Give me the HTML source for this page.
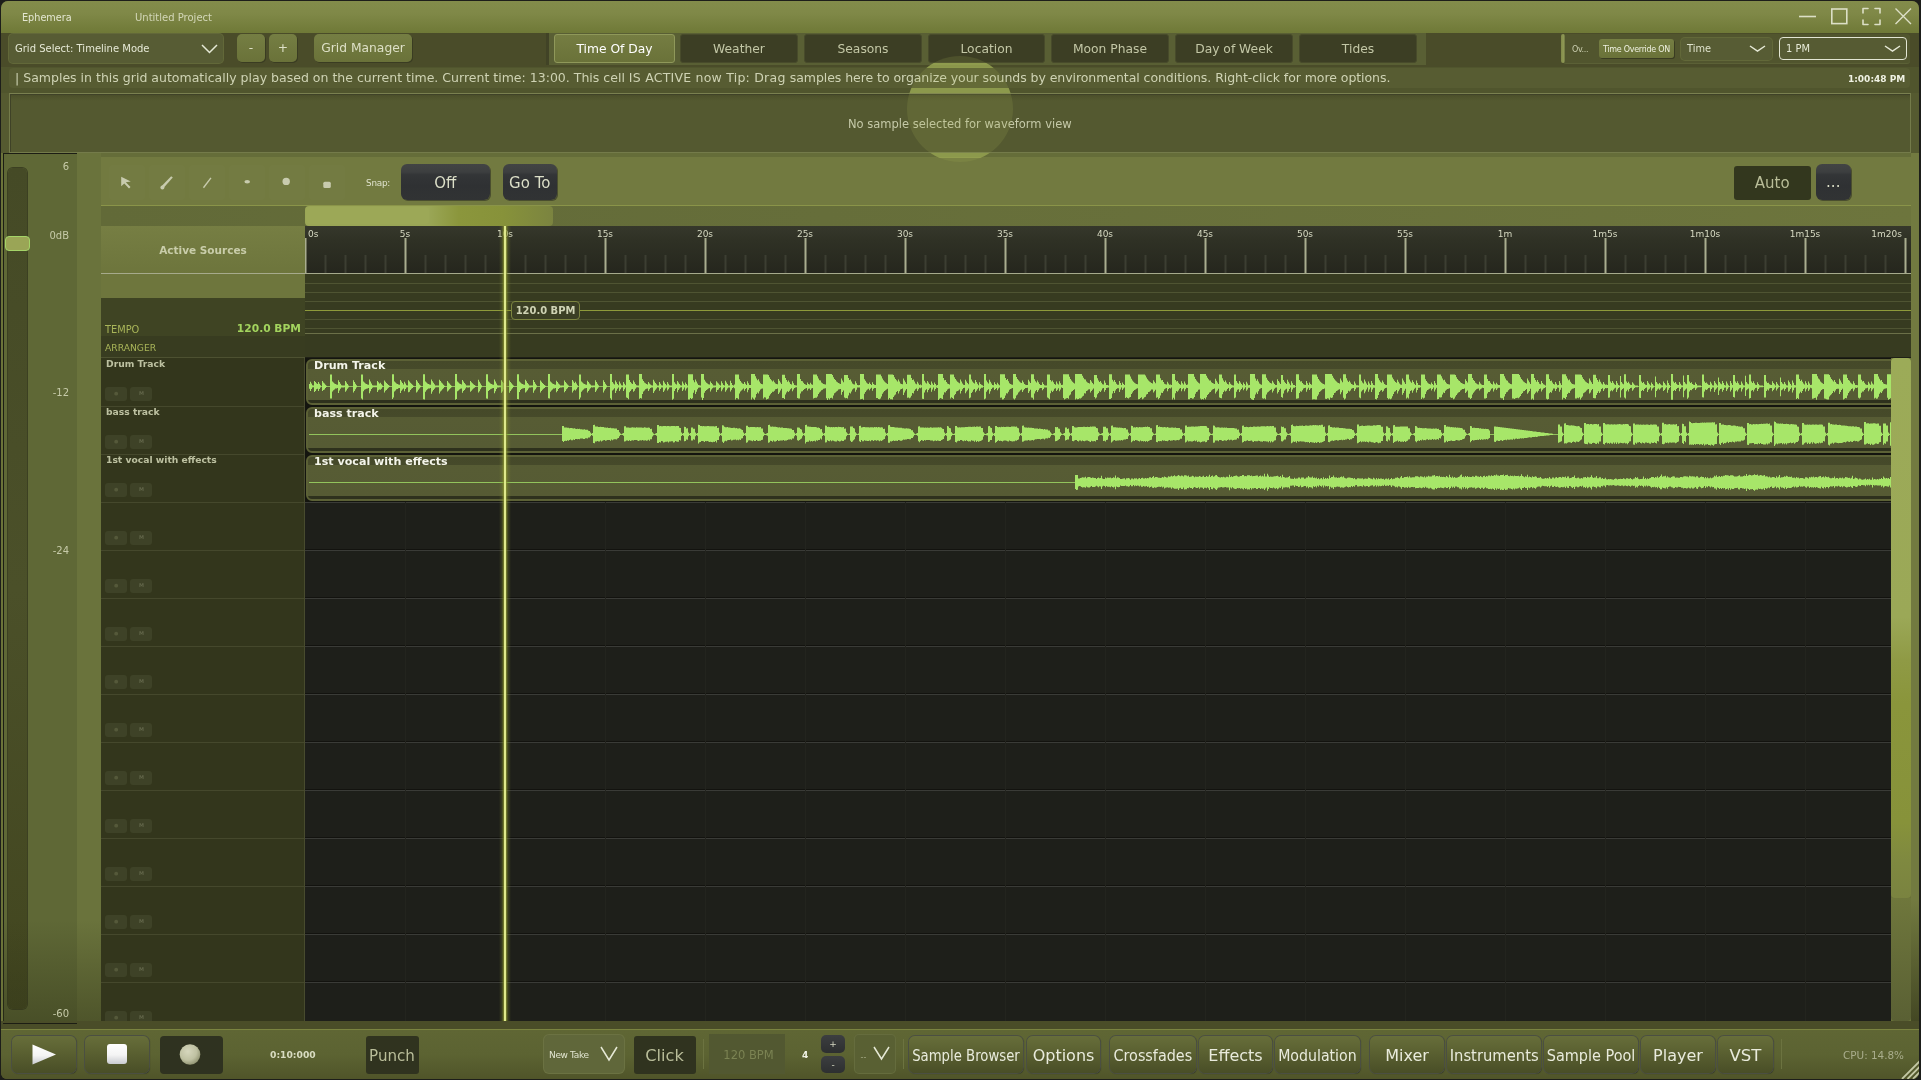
<!DOCTYPE html><html><head><meta charset="utf-8"><title>Ephemera</title><style>
*{box-sizing:border-box;margin:0;padding:0}
html,body{width:1921px;height:1080px;overflow:hidden;background:#1d1e1a}
body{font-family:"DejaVu Sans","Liberation Sans",sans-serif;color:#dfe2cc;position:relative}
.a{position:absolute}
.t{position:absolute;white-space:nowrap;line-height:1}
.c{display:flex;align-items:center;justify-content:center;white-space:nowrap}
.bb{overflow:visible}.bb span{flex:none}
#win{left:1px;top:1px;width:1918.4px;height:1078px;border-radius:7px 7px 6px 6px;background:#555a30;overflow:hidden}
#title{left:0;top:0;width:1919px;height:32px;background:linear-gradient(#838c4b 0%,#7f8847 40%,#6f7937 100%)}
#tool{left:0;top:32px;width:1919px;height:35px;background:#4a4c29}
.btn{border-radius:5px;background:linear-gradient(#757e43,#6a7239);box-shadow:1px 1px 0 #3a3c22;color:#dde0c6}
.tab{border-radius:3px;background:#3c3e24;color:#c3c7a6;font-size:12.3px;top:1px;height:29px;border:1px solid #484b2b;padding-top:1px}
.tab.on{background:linear-gradient(#757d42,#6a7239);color:#fff;border-color:#8f985a}
.combo{border-radius:4px;background:#575c34;box-shadow:0 0 0 1px #626839}
</style></head><body><div class="a" id="win"><div class="a" id="o" style="left:-1px;top:-1px;width:1921px;height:1080px;will-change:transform"><div class="a" style="left:1px;top:1px"><div class="a" id="title">
<div class="t" style="left:21px;top:12px;font-size:9.7px;color:#e4e7d2">Ephemera</div>
<div class="t" style="left:134px;top:12px;font-size:10px;color:#d3d7b8">Untitled Project</div>
<svg class="a" style="left:1790px;top:-0.8px" width="129" height="32" fill="none" stroke="#dcdfc6" stroke-width="1.6">
<path d="M8 16.5H25"/><rect x="40.8" y="9" width="15" height="14.6"/>
<path d="M72 13V8.5H77M84 8.5H89V13M89 20V24.5H84M77 24.5H72V20" stroke-linecap="round" stroke-linejoin="round"/>
<path d="M104.5 8.5L120 24M120 8.5L104.5 24" stroke-width="1.4"/></svg>
</div>
<div class="a" id="tool">
<div class="a combo" style="left:8px;top:1px;width:214px;height:29px"></div>
<div class="t" style="left:14px;top:10.5px;font-size:10px;color:#e6e9d6">Grid Select: Timeline Mode</div>
<svg class="a" style="left:199px;top:8.5px" width="20" height="14" fill="none" stroke="#e6e9d6" stroke-width="1.5"><path d="M2 3L9.5 10.5L17 3"/></svg>
<div class="a btn c" style="left:236px;top:1px;width:28px;height:28px;font-size:12.3px">-</div>
<div class="a btn c" style="left:268px;top:1px;width:28px;height:28px;font-size:12.3px">+</div>
<div class="a btn c" style="left:313px;top:1px;width:98px;height:28px;font-size:12.3px">Grid Manager</div>
<div class="a" style="left:545px;top:0;width:3px;height:32px;background:#414326"></div>
<div class="a" style="left:548px;top:0;width:877px;height:32px;background:#595f34"></div>
<div class="a tab c on" style="left:553px;width:121px">Time Of Day</div>
<div class="a tab c" style="left:679px;width:118px">Weather</div>
<div class="a tab c" style="left:803px;width:118px">Seasons</div>
<div class="a tab c" style="left:927px;width:117px">Location</div>
<div class="a tab c" style="left:1050px;width:118px">Moon Phase</div>
<div class="a tab c" style="left:1174px;width:118px">Day of Week</div>
<div class="a tab c" style="left:1298px;width:118px">Tides</div>
<div class="a" style="left:1562px;top:1px;width:347px;height:29px;background:#51552e;border-radius:3px;box-shadow:0 1px 0 #5b6036"></div>
<div class="a" style="left:1560px;top:1px;width:4px;height:29px;background:linear-gradient(90deg,#7f8848,#8f9955 60%,#6b7340);border-radius:2px"></div>
<div class="t" style="left:1571px;top:12.5px;font-size:8px;letter-spacing:-0.4px;color:#c9cdae">Ov...</div>
<div class="a btn c" style="left:1598px;top:6px;width:75px;height:19px;padding-top:1.5px;font-size:8px;border-radius:3px;letter-spacing:-0.3px;color:#eef0e0">Time Override ON</div>
<div class="a combo" style="left:1680px;top:5px;width:91px;height:22px"></div>
<div class="t" style="left:1686px;top:11px;font-size:9.8px;color:#dfe2cc">Time</div>
<svg class="a" style="left:1747px;top:9px" width="20" height="14" fill="none" stroke="#e6e9d6" stroke-width="1.5"><path d="M2 4L9.5 9L17 4"/></svg>
<div class="a combo" style="left:1778px;top:4px;width:128px;height:23px;box-shadow:none;border:1.5px solid #e3e6d4;background:#565b33"></div>
<div class="t" style="left:1785px;top:11px;font-size:9.9px;color:#e6e9d6">1 PM</div>
<svg class="a" style="left:1882px;top:9px" width="20" height="14" fill="none" stroke="#e6e9d6" stroke-width="1.5"><path d="M2 4L9.5 9L17 4"/></svg>
</div></div><div class="a" style="left:1px;top:67px;width:1919px;height:26px;background:#50552d"></div><div class="a" style="left:9px;top:67.5px;width:1901px;height:20.5px;background:#575c32;border-radius:4px"></div>
<div class="t" id="info" style="left:15px;top:71.5px;font-size:12.52px;color:#cfd3b4">| Samples in this grid automatically play based on the current time. Current time: 13:00. This cell <span style="letter-spacing:0.223px">IS ACTIVE now Tip: Drag </span><span style="letter-spacing:-0.065px">samples here to organize your sounds by environmental conditions. Right-click for more options.</span></div>
<div class="t" id="clock" style="left:1848px;top:75px;font-size:9px;font-weight:bold;color:#f0f2e4">1:00:48 PM</div>
<div class="a" style="left:9px;top:93px;width:1902px;height:60px;background:linear-gradient(#484c29 0,#4f532c 3px,#545930 7px,#545930 100%);border:1px solid #747b4a;border-top-color:#7a8050;box-shadow:inset 1px 1px 0 #3f4227"></div>
<div class="t" id="nosamp" style="left:848px;top:118.5px;font-size:11.5px;color:#c5c9a8">No sample selected for waveform view</div>
<div class="a" style="left:1px;top:153px;width:1919px;height:870px;background:#6b7339"></div>
<div class="a" style="left:1911px;top:153px;width:9px;height:870px;background:#727a40"></div>
<div class="a" style="left:3px;top:153px;width:98px;height:870px;background:#6a733c"></div>
<div class="a" style="left:3px;top:153px;width:74px;height:871px;background:#5f6836;border:1px solid #1c1d14;border-right:none"></div>
<div class="a" style="left:8px;top:168px;width:19px;height:841px;border-radius:5px;background:linear-gradient(#454a26,#4b5029 50%,#42461f);box-shadow:0 0 0 1px #3c4022"></div>
<div class="a" style="left:5px;top:236px;width:25px;height:15px;border-radius:4px;background:#9aa556;border:1px solid #a4d468"></div>
<div class="a" style="left:3px;top:920px;width:98px;height:103px;background:linear-gradient(rgba(50,54,25,0),rgba(50,54,25,0.5))"></div>
<div class="t" style="right:1852px;top:161.5px;font-size:10px;color:#c6caa8">6</div>
<div class="t" style="right:1852px;top:230.5px;font-size:10px;color:#c6caa8">0dB</div>
<div class="t" style="right:1852px;top:387.5px;font-size:10px;color:#c6caa8">-12</div>
<div class="t" style="right:1852px;top:545.5px;font-size:10px;color:#c6caa8">-24</div>
<div class="t" style="right:1852px;top:1008.5px;font-size:10px;color:#c6caa8">-60</div>
<div class="a" style="left:101px;top:153px;width:1810px;height:4px;background:#656d39"></div><div class="a" style="left:101px;top:157px;width:1810px;height:48px;background:#727a40"></div>
<div class="a" style="left:101px;top:205px;width:1810px;height:1px;background:#8a9449"></div>
<div class="a" style="left:101px;top:206px;width:1810px;height:20px;background:linear-gradient(90deg,#626a38,#666e3a 40%,#6d753d)"></div>
<div class="a" style="left:109px;top:165px;width:36px;height:35px;background:rgba(255,255,255,0.012);border-radius:3px"></div>
<div class="a" style="left:149px;top:165px;width:36px;height:35px;background:rgba(255,255,255,0.012);border-radius:3px"></div>
<div class="a" style="left:189px;top:165px;width:36px;height:35px;background:rgba(255,255,255,0.012);border-radius:3px"></div>
<div class="a" style="left:229px;top:165px;width:36px;height:35px;background:rgba(255,255,255,0.012);border-radius:3px"></div>
<div class="a" style="left:269px;top:165px;width:36px;height:35px;background:rgba(255,255,255,0.012);border-radius:3px"></div>
<div class="a" style="left:309px;top:165px;width:36px;height:35px;background:rgba(255,255,255,0.012);border-radius:3px"></div>
<svg class="a" style="left:109px;top:165px" width="240" height="35" fill="#cdd0b4" stroke="none" opacity="0.95">
<path d="M12.2 11.7L12.2 21.2L15.3 18.6L20 23.5L21.5 22.1L16.8 17.3L21.8 16.4Z"/>
<path d="M62.2 11.2L52.2 21.6L54 23.4L63.8 12.6Z"/><circle cx="53.4" cy="22.4" r="2"/>
<path d="M101.4 12.4L93.9 22.3L95 23.2L102.5 13.3Z"/>
<ellipse cx="138.2" cy="16.8" rx="2.8" ry="1.8"/>
<circle cx="177.2" cy="16.4" r="3.7"/>
<rect x="214.3" y="16.7" width="7.5" height="6.3" rx="1.5"/></svg>
<div class="t" style="left:366px;top:178.5px;font-size:8.8px;color:#dfe2cc;letter-spacing:-0.2px">Snap:</div>
<div class="a c" style="left:400.5px;top:164px;width:89.5px;height:35.5px;padding-top:2px;font-size:15px;background:linear-gradient(#424444 0,#3d3f40 22%,#333537 30%,#2f3133 60%,#313334 100%);border-radius:6px;box-shadow:1px 1px 0 #4a4e2e;color:#dcdfc8">Off</div>
<div class="a c" style="left:502.5px;top:164px;width:54.5px;height:35.5px;padding-top:2px;font-size:15px;background:linear-gradient(#424444 0,#3d3f40 22%,#333537 30%,#2f3133 60%,#313334 100%);border-radius:6px;box-shadow:1px 1px 0 #4a4e2e;color:#dcdfc8">Go To</div>
<div class="a c" style="left:1733.5px;top:166.3px;width:77.5px;height:33.6px;font-size:15px;background:#33371e;border-radius:3px;color:#b9bd98">Auto</div>
<div class="a c" style="left:1815.5px;top:164.3px;width:35.5px;height:35.5px;font-size:15px;background:linear-gradient(#424444 0,#3d3f40 22%,#333537 30%,#2f3133 60%,#313334 100%);border-radius:6px;box-shadow:1px 1px 0 #4a4e2e;color:#dcdfc8">...</div>
<div class="a" style="left:305px;top:206px;width:248px;height:20px;border-radius:4px;background:linear-gradient(90deg,#9aa656 0%,#9aa656 50%,#8b963c 62%,#87923a 80%,#7b8440 100%)"></div>
<div class="a" style="left:306px;top:207px;width:123px;height:17px;border-radius:3px;background:#9ca857"></div>
<div class="a" style="left:101px;top:226px;width:204px;height:48px;background:linear-gradient(#767e43,#6d753c)"></div>
<div class="t" style="left:101px;width:204px;text-align:center;top:245px;font-size:10.5px;font-weight:bold;color:#c9cdaa">Active Sources</div>
<div class="a" style="left:305px;top:226px;width:1606px;height:48px;background:linear-gradient(#36382b,#2f3125 30%,#25261d 100%)"></div>
<div class="a" style="left:101px;top:273px;width:1810px;height:1px;background:#a6aa8c"></div>
<svg class="a" style="left:305px;top:227px" width="1606" height="47"><rect x="-0.5" y="11" width="2" height="35" fill="#a9ad8f"/><rect x="19.5" y="28" width="2" height="18" fill="#3c3e32"/><rect x="39.5" y="28" width="2" height="18" fill="#3c3e32"/><rect x="59.5" y="28" width="2" height="18" fill="#3c3e32"/><rect x="79.5" y="28" width="2" height="18" fill="#3c3e32"/><rect x="99.5" y="11" width="2" height="35" fill="#a9ad8f"/><rect x="119.5" y="28" width="2" height="18" fill="#3c3e32"/><rect x="139.5" y="28" width="2" height="18" fill="#3c3e32"/><rect x="159.5" y="28" width="2" height="18" fill="#3c3e32"/><rect x="179.5" y="28" width="2" height="18" fill="#3c3e32"/><rect x="199.5" y="11" width="2" height="35" fill="#a9ad8f"/><rect x="219.5" y="28" width="2" height="18" fill="#3c3e32"/><rect x="239.5" y="28" width="2" height="18" fill="#3c3e32"/><rect x="259.5" y="28" width="2" height="18" fill="#3c3e32"/><rect x="279.5" y="28" width="2" height="18" fill="#3c3e32"/><rect x="299.5" y="11" width="2" height="35" fill="#a9ad8f"/><rect x="319.5" y="28" width="2" height="18" fill="#3c3e32"/><rect x="339.5" y="28" width="2" height="18" fill="#3c3e32"/><rect x="359.5" y="28" width="2" height="18" fill="#3c3e32"/><rect x="379.5" y="28" width="2" height="18" fill="#3c3e32"/><rect x="399.5" y="11" width="2" height="35" fill="#a9ad8f"/><rect x="419.5" y="28" width="2" height="18" fill="#3c3e32"/><rect x="439.5" y="28" width="2" height="18" fill="#3c3e32"/><rect x="459.5" y="28" width="2" height="18" fill="#3c3e32"/><rect x="479.5" y="28" width="2" height="18" fill="#3c3e32"/><rect x="499.5" y="11" width="2" height="35" fill="#a9ad8f"/><rect x="519.5" y="28" width="2" height="18" fill="#3c3e32"/><rect x="539.5" y="28" width="2" height="18" fill="#3c3e32"/><rect x="559.5" y="28" width="2" height="18" fill="#3c3e32"/><rect x="579.5" y="28" width="2" height="18" fill="#3c3e32"/><rect x="599.5" y="11" width="2" height="35" fill="#a9ad8f"/><rect x="619.5" y="28" width="2" height="18" fill="#3c3e32"/><rect x="639.5" y="28" width="2" height="18" fill="#3c3e32"/><rect x="659.5" y="28" width="2" height="18" fill="#3c3e32"/><rect x="679.5" y="28" width="2" height="18" fill="#3c3e32"/><rect x="699.5" y="11" width="2" height="35" fill="#a9ad8f"/><rect x="719.5" y="28" width="2" height="18" fill="#3c3e32"/><rect x="739.5" y="28" width="2" height="18" fill="#3c3e32"/><rect x="759.5" y="28" width="2" height="18" fill="#3c3e32"/><rect x="779.5" y="28" width="2" height="18" fill="#3c3e32"/><rect x="799.5" y="11" width="2" height="35" fill="#a9ad8f"/><rect x="819.5" y="28" width="2" height="18" fill="#3c3e32"/><rect x="839.5" y="28" width="2" height="18" fill="#3c3e32"/><rect x="859.5" y="28" width="2" height="18" fill="#3c3e32"/><rect x="879.5" y="28" width="2" height="18" fill="#3c3e32"/><rect x="899.5" y="11" width="2" height="35" fill="#a9ad8f"/><rect x="919.5" y="28" width="2" height="18" fill="#3c3e32"/><rect x="939.5" y="28" width="2" height="18" fill="#3c3e32"/><rect x="959.5" y="28" width="2" height="18" fill="#3c3e32"/><rect x="979.5" y="28" width="2" height="18" fill="#3c3e32"/><rect x="999.5" y="11" width="2" height="35" fill="#a9ad8f"/><rect x="1019.5" y="28" width="2" height="18" fill="#3c3e32"/><rect x="1039.5" y="28" width="2" height="18" fill="#3c3e32"/><rect x="1059.5" y="28" width="2" height="18" fill="#3c3e32"/><rect x="1079.5" y="28" width="2" height="18" fill="#3c3e32"/><rect x="1099.5" y="11" width="2" height="35" fill="#a9ad8f"/><rect x="1119.5" y="28" width="2" height="18" fill="#3c3e32"/><rect x="1139.5" y="28" width="2" height="18" fill="#3c3e32"/><rect x="1159.5" y="28" width="2" height="18" fill="#3c3e32"/><rect x="1179.5" y="28" width="2" height="18" fill="#3c3e32"/><rect x="1199.5" y="11" width="2" height="35" fill="#a9ad8f"/><rect x="1219.5" y="28" width="2" height="18" fill="#3c3e32"/><rect x="1239.5" y="28" width="2" height="18" fill="#3c3e32"/><rect x="1259.5" y="28" width="2" height="18" fill="#3c3e32"/><rect x="1279.5" y="28" width="2" height="18" fill="#3c3e32"/><rect x="1299.5" y="11" width="2" height="35" fill="#a9ad8f"/><rect x="1319.5" y="28" width="2" height="18" fill="#3c3e32"/><rect x="1339.5" y="28" width="2" height="18" fill="#3c3e32"/><rect x="1359.5" y="28" width="2" height="18" fill="#3c3e32"/><rect x="1379.5" y="28" width="2" height="18" fill="#3c3e32"/><rect x="1399.5" y="11" width="2" height="35" fill="#a9ad8f"/><rect x="1419.5" y="28" width="2" height="18" fill="#3c3e32"/><rect x="1439.5" y="28" width="2" height="18" fill="#3c3e32"/><rect x="1459.5" y="28" width="2" height="18" fill="#3c3e32"/><rect x="1479.5" y="28" width="2" height="18" fill="#3c3e32"/><rect x="1499.5" y="11" width="2" height="35" fill="#a9ad8f"/><rect x="1519.5" y="28" width="2" height="18" fill="#3c3e32"/><rect x="1539.5" y="28" width="2" height="18" fill="#3c3e32"/><rect x="1559.5" y="28" width="2" height="18" fill="#3c3e32"/><rect x="1579.5" y="28" width="2" height="18" fill="#3c3e32"/><rect x="1599.5" y="11" width="2" height="35" fill="#a9ad8f"/></svg>
<div class="t rl" style="left:308px;top:230px;font-size:9px;color:#d6d9c2">0s</div>
<div class="t rl" style="left:385px;width:40px;text-align:center;top:230px;font-size:9px;color:#d6d9c2">5s</div>
<div class="t rl" style="left:485px;width:40px;text-align:center;top:230px;font-size:9px;color:#d6d9c2">10s</div>
<div class="t rl" style="left:585px;width:40px;text-align:center;top:230px;font-size:9px;color:#d6d9c2">15s</div>
<div class="t rl" style="left:685px;width:40px;text-align:center;top:230px;font-size:9px;color:#d6d9c2">20s</div>
<div class="t rl" style="left:785px;width:40px;text-align:center;top:230px;font-size:9px;color:#d6d9c2">25s</div>
<div class="t rl" style="left:885px;width:40px;text-align:center;top:230px;font-size:9px;color:#d6d9c2">30s</div>
<div class="t rl" style="left:985px;width:40px;text-align:center;top:230px;font-size:9px;color:#d6d9c2">35s</div>
<div class="t rl" style="left:1085px;width:40px;text-align:center;top:230px;font-size:9px;color:#d6d9c2">40s</div>
<div class="t rl" style="left:1185px;width:40px;text-align:center;top:230px;font-size:9px;color:#d6d9c2">45s</div>
<div class="t rl" style="left:1285px;width:40px;text-align:center;top:230px;font-size:9px;color:#d6d9c2">50s</div>
<div class="t rl" style="left:1385px;width:40px;text-align:center;top:230px;font-size:9px;color:#d6d9c2">55s</div>
<div class="t rl" style="left:1485px;width:40px;text-align:center;top:230px;font-size:9px;color:#d6d9c2">1m</div>
<div class="t rl" style="left:1585px;width:40px;text-align:center;top:230px;font-size:9px;color:#d6d9c2">1m5s</div>
<div class="t rl" style="left:1685px;width:40px;text-align:center;top:230px;font-size:9px;color:#d6d9c2">1m10s</div>
<div class="t rl" style="left:1785px;width:40px;text-align:center;top:230px;font-size:9px;color:#d6d9c2">1m15s</div>
<div class="t rl" style="right:19px;top:230px;font-size:9px;color:#d6d9c2">1m20s</div>
<div class="a" style="left:101px;top:274px;width:204px;height:24px;background:#6e763d"></div>
<div class="a" style="left:101px;top:298px;width:204px;height:38px;background:#3f4423"></div>
<div class="a" style="left:101px;top:336px;width:204px;height:22px;background:#383c20"></div>
<div class="t" style="left:105px;top:324.5px;font-size:9.8px;color:#a9b559">TEMPO</div>
<div class="t" style="right:1620px;top:323.5px;font-size:10.7px;font-weight:bold;color:#a3d45e">120.0 BPM</div>
<div class="t" style="left:105px;top:343px;font-size:9.2px;color:#a9b559">ARRANGER</div>
<div class="a" style="left:305px;top:274px;width:1606px;height:84px;background:#373b20"></div>
<div class="a" style="left:305px;top:283px;width:1606px;height:1px;background:#4f5432"></div>
<div class="a" style="left:305px;top:292px;width:1606px;height:1px;background:#4f5432"></div>
<div class="a" style="left:305px;top:301px;width:1606px;height:1px;background:#4f5432"></div>
<div class="a" style="left:305px;top:319px;width:1606px;height:1px;background:#4f5432"></div>
<div class="a" style="left:305px;top:328px;width:1606px;height:1px;background:#4f5432"></div>
<div class="a" style="left:305px;top:333px;width:1606px;height:1px;background:#6b7048"></div>
<div class="a" style="left:305px;top:310px;width:1606px;height:1px;background:#8e9a3a"></div>
<div class="a" style="left:305px;top:357px;width:1606px;height:1px;background:#1f2016"></div>
<div class="a c" style="left:511px;top:301px;width:69px;height:19px;border:1px solid #7c8540;border-radius:4px;background:#3b3f24;font-size:9.95px;font-weight:bold;color:#cfd3b4">120.0 BPM</div>
<div class="a" style="left:1891px;top:358px;width:20px;height:663px;background:#6a7239"></div>
<div class="a" style="left:101px;top:358px;width:204px;height:663px;background:#33361c"></div>
<div class="a" style="left:305px;top:358px;width:1586px;height:663px;background:#1e1f1a"></div>
<div class="a" style="left:101px;top:357px;width:204px;height:1px;background:#4d5131"></div>
<div class="t" style="left:106px;top:359px;font-size:9.2px;font-weight:bold;color:#bdc1a1">Drum Track</div>
<div class="a" style="left:105px;top:387px;width:22px;height:14px;border-radius:3px;background:#3e4227"></div>
<div class="a" style="left:130px;top:387px;width:22px;height:14px;border-radius:3px;background:#3e4227"></div>
<div class="t" style="left:114px;top:391px;font-size:5px;color:#55593a">●</div>
<div class="t" style="left:139px;top:391px;font-size:5px;color:#62664a;font-weight:bold">M</div>
<div class="a" style="left:101px;top:406px;width:204px;height:1px;background:#45482c"></div>
<div class="a" style="left:305px;top:405px;width:1586px;height:1px;background:#13130f"></div>
<div class="a" style="left:305px;top:406px;width:1586px;height:1px;background:#3a3b37"></div>
<div class="t" style="left:106px;top:407px;font-size:9.2px;font-weight:bold;color:#bdc1a1">bass track</div>
<div class="a" style="left:105px;top:435px;width:22px;height:14px;border-radius:3px;background:#3e4227"></div>
<div class="a" style="left:130px;top:435px;width:22px;height:14px;border-radius:3px;background:#3e4227"></div>
<div class="t" style="left:114px;top:439px;font-size:5px;color:#55593a">●</div>
<div class="t" style="left:139px;top:439px;font-size:5px;color:#62664a;font-weight:bold">M</div>
<div class="a" style="left:101px;top:454px;width:204px;height:1px;background:#45482c"></div>
<div class="a" style="left:305px;top:453px;width:1586px;height:1px;background:#13130f"></div>
<div class="a" style="left:305px;top:454px;width:1586px;height:1px;background:#3a3b37"></div>
<div class="t" style="left:106px;top:455px;font-size:9.2px;font-weight:bold;color:#bdc1a1">1st vocal with effects</div>
<div class="a" style="left:105px;top:483px;width:22px;height:14px;border-radius:3px;background:#3e4227"></div>
<div class="a" style="left:130px;top:483px;width:22px;height:14px;border-radius:3px;background:#3e4227"></div>
<div class="t" style="left:114px;top:487px;font-size:5px;color:#55593a">●</div>
<div class="t" style="left:139px;top:487px;font-size:5px;color:#62664a;font-weight:bold">M</div>
<div class="a" style="left:101px;top:502px;width:204px;height:1px;background:#45482c"></div>
<div class="a" style="left:305px;top:501px;width:1586px;height:1px;background:#13130f"></div>
<div class="a" style="left:305px;top:502px;width:1586px;height:1px;background:#3a3b37"></div>
<div class="a" style="left:105px;top:531px;width:22px;height:14px;border-radius:3px;background:#3e4227"></div>
<div class="a" style="left:130px;top:531px;width:22px;height:14px;border-radius:3px;background:#3e4227"></div>
<div class="t" style="left:114px;top:535px;font-size:5px;color:#55593a">●</div>
<div class="t" style="left:139px;top:535px;font-size:5px;color:#62664a;font-weight:bold">M</div>
<div class="a" style="left:101px;top:550px;width:204px;height:1px;background:#45482c"></div>
<div class="a" style="left:305px;top:549px;width:1586px;height:1px;background:#13130f"></div>
<div class="a" style="left:305px;top:550px;width:1586px;height:1px;background:#3a3b37"></div>
<div class="a" style="left:105px;top:579px;width:22px;height:14px;border-radius:3px;background:#3e4227"></div>
<div class="a" style="left:130px;top:579px;width:22px;height:14px;border-radius:3px;background:#3e4227"></div>
<div class="t" style="left:114px;top:583px;font-size:5px;color:#55593a">●</div>
<div class="t" style="left:139px;top:583px;font-size:5px;color:#62664a;font-weight:bold">M</div>
<div class="a" style="left:101px;top:598px;width:204px;height:1px;background:#45482c"></div>
<div class="a" style="left:305px;top:597px;width:1586px;height:1px;background:#13130f"></div>
<div class="a" style="left:305px;top:598px;width:1586px;height:1px;background:#3a3b37"></div>
<div class="a" style="left:105px;top:627px;width:22px;height:14px;border-radius:3px;background:#3e4227"></div>
<div class="a" style="left:130px;top:627px;width:22px;height:14px;border-radius:3px;background:#3e4227"></div>
<div class="t" style="left:114px;top:631px;font-size:5px;color:#55593a">●</div>
<div class="t" style="left:139px;top:631px;font-size:5px;color:#62664a;font-weight:bold">M</div>
<div class="a" style="left:101px;top:646px;width:204px;height:1px;background:#45482c"></div>
<div class="a" style="left:305px;top:645px;width:1586px;height:1px;background:#13130f"></div>
<div class="a" style="left:305px;top:646px;width:1586px;height:1px;background:#3a3b37"></div>
<div class="a" style="left:105px;top:675px;width:22px;height:14px;border-radius:3px;background:#3e4227"></div>
<div class="a" style="left:130px;top:675px;width:22px;height:14px;border-radius:3px;background:#3e4227"></div>
<div class="t" style="left:114px;top:679px;font-size:5px;color:#55593a">●</div>
<div class="t" style="left:139px;top:679px;font-size:5px;color:#62664a;font-weight:bold">M</div>
<div class="a" style="left:101px;top:694px;width:204px;height:1px;background:#45482c"></div>
<div class="a" style="left:305px;top:693px;width:1586px;height:1px;background:#13130f"></div>
<div class="a" style="left:305px;top:694px;width:1586px;height:1px;background:#3a3b37"></div>
<div class="a" style="left:105px;top:723px;width:22px;height:14px;border-radius:3px;background:#3e4227"></div>
<div class="a" style="left:130px;top:723px;width:22px;height:14px;border-radius:3px;background:#3e4227"></div>
<div class="t" style="left:114px;top:727px;font-size:5px;color:#55593a">●</div>
<div class="t" style="left:139px;top:727px;font-size:5px;color:#62664a;font-weight:bold">M</div>
<div class="a" style="left:101px;top:742px;width:204px;height:1px;background:#45482c"></div>
<div class="a" style="left:305px;top:741px;width:1586px;height:1px;background:#13130f"></div>
<div class="a" style="left:305px;top:742px;width:1586px;height:1px;background:#3a3b37"></div>
<div class="a" style="left:105px;top:771px;width:22px;height:14px;border-radius:3px;background:#3e4227"></div>
<div class="a" style="left:130px;top:771px;width:22px;height:14px;border-radius:3px;background:#3e4227"></div>
<div class="t" style="left:114px;top:775px;font-size:5px;color:#55593a">●</div>
<div class="t" style="left:139px;top:775px;font-size:5px;color:#62664a;font-weight:bold">M</div>
<div class="a" style="left:101px;top:790px;width:204px;height:1px;background:#45482c"></div>
<div class="a" style="left:305px;top:789px;width:1586px;height:1px;background:#13130f"></div>
<div class="a" style="left:305px;top:790px;width:1586px;height:1px;background:#3a3b37"></div>
<div class="a" style="left:105px;top:819px;width:22px;height:14px;border-radius:3px;background:#3e4227"></div>
<div class="a" style="left:130px;top:819px;width:22px;height:14px;border-radius:3px;background:#3e4227"></div>
<div class="t" style="left:114px;top:823px;font-size:5px;color:#55593a">●</div>
<div class="t" style="left:139px;top:823px;font-size:5px;color:#62664a;font-weight:bold">M</div>
<div class="a" style="left:101px;top:838px;width:204px;height:1px;background:#45482c"></div>
<div class="a" style="left:305px;top:837px;width:1586px;height:1px;background:#13130f"></div>
<div class="a" style="left:305px;top:838px;width:1586px;height:1px;background:#3a3b37"></div>
<div class="a" style="left:105px;top:867px;width:22px;height:14px;border-radius:3px;background:#3e4227"></div>
<div class="a" style="left:130px;top:867px;width:22px;height:14px;border-radius:3px;background:#3e4227"></div>
<div class="t" style="left:114px;top:871px;font-size:5px;color:#55593a">●</div>
<div class="t" style="left:139px;top:871px;font-size:5px;color:#62664a;font-weight:bold">M</div>
<div class="a" style="left:101px;top:886px;width:204px;height:1px;background:#45482c"></div>
<div class="a" style="left:305px;top:885px;width:1586px;height:1px;background:#13130f"></div>
<div class="a" style="left:305px;top:886px;width:1586px;height:1px;background:#3a3b37"></div>
<div class="a" style="left:105px;top:915px;width:22px;height:14px;border-radius:3px;background:#3e4227"></div>
<div class="a" style="left:130px;top:915px;width:22px;height:14px;border-radius:3px;background:#3e4227"></div>
<div class="t" style="left:114px;top:919px;font-size:5px;color:#55593a">●</div>
<div class="t" style="left:139px;top:919px;font-size:5px;color:#62664a;font-weight:bold">M</div>
<div class="a" style="left:101px;top:934px;width:204px;height:1px;background:#45482c"></div>
<div class="a" style="left:305px;top:933px;width:1586px;height:1px;background:#13130f"></div>
<div class="a" style="left:305px;top:934px;width:1586px;height:1px;background:#3a3b37"></div>
<div class="a" style="left:105px;top:963px;width:22px;height:14px;border-radius:3px;background:#3e4227"></div>
<div class="a" style="left:130px;top:963px;width:22px;height:14px;border-radius:3px;background:#3e4227"></div>
<div class="t" style="left:114px;top:967px;font-size:5px;color:#55593a">●</div>
<div class="t" style="left:139px;top:967px;font-size:5px;color:#62664a;font-weight:bold">M</div>
<div class="a" style="left:101px;top:982px;width:204px;height:1px;background:#45482c"></div>
<div class="a" style="left:305px;top:981px;width:1586px;height:1px;background:#13130f"></div>
<div class="a" style="left:305px;top:982px;width:1586px;height:1px;background:#3a3b37"></div>
<div class="a" style="left:105px;top:1011px;width:22px;height:14px;border-radius:3px;background:#3e4227"></div>
<div class="a" style="left:130px;top:1011px;width:22px;height:14px;border-radius:3px;background:#3e4227"></div>
<div class="t" style="left:114px;top:1015px;font-size:5px;color:#55593a">●</div>
<div class="t" style="left:139px;top:1015px;font-size:5px;color:#62664a;font-weight:bold">M</div>
<div class="a" style="left:304px;top:358px;width:1px;height:663px;background:#484b2e"></div>
<div class="a" style="left:405px;top:502px;width:1px;height:519px;background:#23241e"></div>
<div class="a" style="left:505px;top:502px;width:1px;height:519px;background:#23241e"></div>
<div class="a" style="left:605px;top:502px;width:1px;height:519px;background:#23241e"></div>
<div class="a" style="left:705px;top:502px;width:1px;height:519px;background:#23241e"></div>
<div class="a" style="left:805px;top:502px;width:1px;height:519px;background:#23241e"></div>
<div class="a" style="left:905px;top:502px;width:1px;height:519px;background:#23241e"></div>
<div class="a" style="left:1005px;top:502px;width:1px;height:519px;background:#23241e"></div>
<div class="a" style="left:1105px;top:502px;width:1px;height:519px;background:#23241e"></div>
<div class="a" style="left:1205px;top:502px;width:1px;height:519px;background:#23241e"></div>
<div class="a" style="left:1305px;top:502px;width:1px;height:519px;background:#23241e"></div>
<div class="a" style="left:1405px;top:502px;width:1px;height:519px;background:#23241e"></div>
<div class="a" style="left:1505px;top:502px;width:1px;height:519px;background:#23241e"></div>
<div class="a" style="left:1605px;top:502px;width:1px;height:519px;background:#23241e"></div>
<div class="a" style="left:1705px;top:502px;width:1px;height:519px;background:#23241e"></div>
<div class="a" style="left:1805px;top:502px;width:1px;height:519px;background:#23241e"></div>
<div class="a" style="left:305px;top:358px;width:1586px;height:48px;overflow:hidden;background:#14150f"><div class="a" style="left:1px;top:1.3px;width:1600px;height:45.4px;border-radius:6px;border:2px solid #5c6136;background:linear-gradient(#454929 0,#464a2a 7.7px,#575c34 8.2px,#565b34 38.5px,#2e311d 39px,#2e311d 41.4px)"></div></div>
<div class="t" style="left:314px;top:359.5px;font-size:11.1px;font-weight:bold;color:#f4f5ea">Drum Track</div>
<div class="a" style="left:305px;top:406px;width:1586px;height:48px;overflow:hidden;background:#14150f"><div class="a" style="left:1px;top:1.3px;width:1600px;height:45.4px;border-radius:6px;border:2px solid #5c6136;background:linear-gradient(#454929 0,#464a2a 7.7px,#575c34 8.2px,#565b34 38.5px,#2e311d 39px,#2e311d 41.4px)"></div></div>
<div class="t" style="left:314px;top:407.5px;font-size:11.1px;font-weight:bold;color:#f4f5ea">bass track</div>
<div class="a" style="left:305px;top:454px;width:1586px;height:48px;overflow:hidden;background:#14150f"><div class="a" style="left:1px;top:1.3px;width:1600px;height:45.4px;border-radius:6px;border:2px solid #5c6136;background:linear-gradient(#454929 0,#464a2a 7.7px,#575c34 8.2px,#565b34 38.5px,#2e311d 39px,#2e311d 41.4px)"></div></div>
<div class="t" style="left:314px;top:455.5px;font-size:11.1px;font-weight:bold;color:#f4f5ea">1st vocal with effects</div>
<svg class="a" style="left:0;top:0" width="1921" height="520" fill="#a7e669"><path d="M309 384.1V384.1h1V381.7h1V383.5h1V385.2h1V385.5h1V381.0h1V382.1h1V383.2h1V384.1h1V382.1h1V383.8h1V385.3h1V386.0h1V381.1h1V382.4h1V383.6h1V384.7h1V385.7h1V386.0h1V386.0h1V386.0h1V374.5h1V374.5h1V381.4h1V382.6h1V383.4h1V384.1h1V384.5h1V384.8h1V380.2h1V382.1h1V383.8h1V385.3h1V385.5h1V385.5h1V385.5h1V381.0h1V382.6h1V384.1h1V385.4h1V386.0h1V386.0h1V386.0h1V386.0h1V380.2h1V382.0h1V383.8h1V385.3h1V386.0h1V386.0h1V386.0h1V386.0h1V374.4h1V374.4h1V381.4h1V382.6h1V383.4h1V384.1h1V384.5h1V384.8h1V379.4h1V381.5h1V383.5h1V385.2h1V385.5h1V385.5h1V385.5h1V385.5h1V381.0h1V382.3h1V383.5h1V382.7h1V384.2h1V385.5h1V386.0h1V380.6h1V381.8h1V382.9h1V384.0h1V384.9h1V385.8h1V386.0h1V386.0h1V374.2h1V374.2h1V381.4h1V382.6h1V383.4h1V384.1h1V384.5h1V384.8h1V380.0h1V381.6h1V383.0h1V384.4h1V381.8h1V383.6h1V385.2h1V385.5h1V380.2h1V381.5h1V382.7h1V383.8h1V384.8h1V385.7h1V386.0h1V386.0h1V380.0h1V381.5h1V383.0h1V384.4h1V385.5h1V386.0h1V386.0h1V374.3h1V374.3h1V381.4h1V382.6h1V383.4h1V384.1h1V384.5h1V384.8h1V379.5h1V381.2h1V382.8h1V384.2h1V385.5h1V385.5h1V385.5h1V385.5h1V379.8h1V381.1h1V382.4h1V383.6h1V384.7h1V385.7h1V386.0h1V386.0h1V381.1h1V382.4h1V383.6h1V384.7h1V385.7h1V386.0h1V386.0h1V386.0h1V374.0h1V374.0h1V381.4h1V382.6h1V383.4h1V384.1h1V384.5h1V379.9h1V381.5h1V383.0h1V384.3h1V385.4h1V385.5h1V385.5h1V385.5h1V381.1h1V382.2h1V383.2h1V384.2h1V385.0h1V385.8h1V386.0h1V386.0h1V379.8h1V381.8h1V383.6h1V385.2h1V386.0h1V386.0h1V386.0h1V386.0h1V374.3h1V374.3h1V381.4h1V382.6h1V383.4h1V384.1h1V384.5h1V384.8h1V379.5h1V381.6h1V383.5h1V385.2h1V385.5h1V385.5h1V385.5h1V380.2h1V381.7h1V383.1h1V384.4h1V385.6h1V386.0h1V386.0h1V386.0h1V380.6h1V382.0h1V383.3h1V384.5h1V385.6h1V386.0h1V386.0h1V386.0h1V374.3h1V374.3h1V381.4h1V382.6h1V383.4h1V384.1h1V384.5h1V384.8h1V379.7h1V381.3h1V382.9h1V384.3h1V385.5h1V385.5h1V385.5h1V385.5h1V380.0h1V381.9h1V383.7h1V385.3h1V386.0h1V386.0h1V386.0h1V380.6h1V381.8h1V382.9h1V384.0h1V384.9h1V385.8h1V386.0h1V386.0h1V374.0h1V374.0h1V381.4h1V382.6h1V383.4h1V384.1h1V384.5h1V384.8h1V380.7h1V382.1h1V383.4h1V384.6h1V385.5h1V385.5h1V385.5h1V385.5h1V380.6h1V382.0h1V383.3h1V384.5h1V385.6h1V386.0h1V386.0h1V386.0h1V380.1h1V381.6h1V383.1h1V381.7h1V383.6h1V385.2h1V386.0h1V374.6h1V374.6h1V381.4h1V382.6h1V383.4h1V384.1h1V384.5h1V384.8h1V380.8h1V382.1h1V383.4h1V384.6h1V385.5h1V385.5h1V385.5h1V385.5h1V380.3h1V382.1h1V383.8h1V385.3h1V386.0h1V386.0h1V386.0h1V386.0h1V380.2h1V382.1h1V383.8h1V385.3h1V386.0h1V386.0h1V386.0h1V374.1h1V374.1h1V381.9h1V383.5h1V384.4h1V380.4h1V382.2h1V383.9h1V385.3h1V381.5h1V383.5h1V385.2h1V385.5h1V382.1h1V383.8h1V385.3h1V374.4h1V374.4h1V374.4h1V379.9h1V381.9h1V383.2h1V384.0h1V380.5h1V382.3h1V383.9h1V385.3h1V385.4h1V385.5h1V374.1h1V374.1h1V374.1h1V379.3h1V381.1h1V382.4h1V383.3h1V384.0h1V384.4h1V382.1h1V383.4h1V384.6h1V385.3h1V385.4h1V379.8h1V381.4h1V382.9h1V384.3h1V385.5h1V385.4h1V382.0h1V383.8h1V385.3h1V385.4h1V380.8h1V382.5h1V384.1h1V385.3h1V382.1h1V383.8h1V385.3h1V385.5h1V385.4h1V374.0h1V374.0h1V382.2h1V383.7h1V384.6h1V381.0h1V382.6h1V384.1h1V385.3h1V385.5h1V381.4h1V383.4h1V385.1h1V382.4h1V384.0h1V385.4h1V374.2h1V374.2h1V374.2h1V374.2h1V374.2h1V380.3h1V382.2h1V379.4h1V381.5h1V383.5h1V385.0h1V385.2h1V385.4h1V374.0h1V374.0h1V374.0h1V379.7h1V381.5h1V382.8h1V383.6h1V384.2h1V384.6h1V381.5h1V383.0h1V384.3h1V385.4h1V385.4h1V385.5h1V381.2h1V382.4h1V383.6h1V384.7h1V385.4h1V381.2h1V383.3h1V385.1h1V385.4h1V380.7h1V382.4h1V384.0h1V385.4h1V385.4h1V380.8h1V383.0h1V385.0h1V385.6h1V384.6h1V374.4h1V374.4h1V374.4h1V374.4h1V379.3h1V381.1h1V382.6h1V383.5h1V384.1h1V381.9h1V383.7h1V384.9h1V381.2h1V383.2h1V385.0h1V384.9h1V374.1h1V374.1h1V374.1h1V374.1h1V376.2h1V378.5h1V380.3h1V379.3h1V381.5h1V383.3h1V383.9h1V384.3h1V374.4h1V374.4h1V374.4h1V374.4h1V374.4h1V375.1h1V377.3h1V379.0h1V380.3h1V381.4h1V380.5h1V382.2h1V383.5h1V383.9h1V384.2h1V378.9h1V380.8h1V382.5h1V384.0h1V374.7h1V374.7h1V374.7h1V377.9h1V380.1h1V381.7h1V380.4h1V382.2h1V383.9h1V384.6h1V381.3h1V383.3h1V384.9h1V385.3h1V385.4h1V373.9h1V373.9h1V373.9h1V379.0h1V381.0h1V381.2h1V382.8h1V384.1h1V384.5h1V384.9h1V382.4h1V384.0h1V384.4h1V382.8h1V384.2h1V384.8h1V374.4h1V374.4h1V374.4h1V374.4h1V376.2h1V378.5h1V380.3h1V380.6h1V382.4h1V383.3h1V383.9h1V384.3h1V384.6h1V374.0h1V374.0h1V374.0h1V374.0h1V374.0h1V374.0h1V375.1h1V377.3h1V379.0h1V380.0h1V381.4h1V382.2h1V382.9h1V383.5h1V383.9h1V378.5h1V380.4h1V382.2h1V375.0h1V375.0h1V375.0h1V375.0h1V377.9h1V380.1h1V379.6h1V381.6h1V383.5h1V384.2h1V384.6h1V381.3h1V383.3h1V385.1h1V385.3h1V385.1h1V374.1h1V374.1h1V374.1h1V374.1h1V379.2h1V380.8h1V382.5h1V383.5h1V384.1h1V382.4h1V384.0h1V385.1h1V382.3h1V383.9h1V384.8h1V384.9h1V374.4h1V374.4h1V374.4h1V374.4h1V374.4h1V376.2h1V378.5h1V380.3h1V381.6h1V382.6h1V383.3h1V383.9h1V374.4h1V374.4h1V374.4h1V374.4h1V374.4h1V375.1h1V377.3h1V379.0h1V380.3h1V381.4h1V379.5h1V381.6h1V383.5h1V383.9h1V384.2h1V378.5h1V380.4h1V382.2h1V383.9h1V374.8h1V374.8h1V374.8h1V374.8h1V377.9h1V380.1h1V379.5h1V381.6h1V383.5h1V384.2h1V381.8h1V383.6h1V385.1h1V384.6h1V385.3h1V374.0h1V374.0h1V380.8h1V382.4h1V383.5h1V380.9h1V382.6h1V384.1h1V385.1h1V381.4h1V383.4h1V385.1h1V382.4h1V384.0h1V385.4h1V384.9h1V373.9h1V373.9h1V373.9h1V373.9h1V373.9h1V378.1h1V380.2h1V379.9h1V381.9h1V383.5h1V384.1h1V384.5h1V374.5h1V374.5h1V374.5h1V374.5h1V377.2h1V379.1h1V380.6h1V381.7h1V382.6h1V383.3h1V379.6h1V381.6h1V383.5h1V384.8h1V385.0h1V379.8h1V381.4h1V382.9h1V384.3h1V374.4h1V374.4h1V379.4h1V381.4h1V382.7h1V383.6h1V380.1h1V382.0h1V383.8h1V385.2h1V382.2h1V383.9h1V384.8h1V385.2h1V386.0h1V374.1h1V374.1h1V380.6h1V382.3h1V383.4h1V379.7h1V381.7h1V383.6h1V385.1h1V385.3h1V382.3h1V384.0h1V384.8h1V382.8h1V384.2h1V385.3h1V374.3h1V374.3h1V374.3h1V374.3h1V374.3h1V377.9h1V379.9h1V379.0h1V381.3h1V383.3h1V383.9h1V384.4h1V384.7h1V373.9h1V373.9h1V373.9h1V377.0h1V378.9h1V380.3h1V381.5h1V382.4h1V383.1h1V380.5h1V382.3h1V383.9h1V384.7h1V384.9h1V384.9h1V379.8h1V381.4h1V382.9h1V374.2h1V374.2h1V374.2h1V379.2h1V381.2h1V382.6h1V380.5h1V382.3h1V383.9h1V384.9h1V384.9h1V382.3h1V384.0h1V385.3h1V385.4h1V385.5h1V374.4h1V374.4h1V374.4h1V379.9h1V381.6h1V380.5h1V382.3h1V383.9h1V384.7h1V381.4h1V383.4h1V384.6h1V381.3h1V383.3h1V385.1h1V384.8h1V374.2h1V374.2h1V374.2h1V374.2h1V374.2h1V374.2h1V376.8h1V378.9h1V380.6h1V381.8h1V382.7h1V383.4h1V374.0h1V374.0h1V374.0h1V374.0h1V374.0h1V374.0h1V374.0h1V375.7h1V377.7h1V379.3h1V379.5h1V381.6h1V382.4h1V383.1h1V383.6h1V379.9h1V381.5h1V383.0h1V384.3h1V374.9h1V374.9h1V374.9h1V378.3h1V380.4h1V381.9h1V381.1h1V382.7h1V384.2h1V384.6h1V380.5h1V382.8h1V384.9h1V384.9h1V385.4h1V374.3h1V374.3h1V374.3h1V379.8h1V381.6h1V380.1h1V382.0h1V383.7h1V384.7h1V384.7h1V381.0h1V383.1h1V385.0h1V382.6h1V384.1h1V385.1h1V374.5h1V374.5h1V374.5h1V374.5h1V374.5h1V376.6h1V378.8h1V380.4h1V381.7h1V382.7h1V383.4h1V383.9h1V384.3h1V374.4h1V374.4h1V374.4h1V374.4h1V374.4h1V374.4h1V374.4h1V375.5h1V377.5h1V379.2h1V380.5h1V381.5h1V382.3h1V383.0h1V383.5h1V380.3h1V381.8h1V383.2h1V374.6h1V374.6h1V374.6h1V374.6h1V378.2h1V380.3h1V380.0h1V381.9h1V383.7h1V384.2h1V384.6h1V381.8h1V383.6h1V384.7h1V384.6h1V385.1h1V373.9h1V373.9h1V373.9h1V379.9h1V381.6h1V381.0h1V382.7h1V384.1h1V384.7h1V381.3h1V383.3h1V384.6h1V381.4h1V383.4h1V385.1h1V384.6h1V374.0h1V374.0h1V374.0h1V374.0h1V374.0h1V374.0h1V376.8h1V378.9h1V380.6h1V381.8h1V382.7h1V383.4h1V374.0h1V374.0h1V374.0h1V374.0h1V374.0h1V374.0h1V375.7h1V377.7h1V379.3h1V380.6h1V380.5h1V382.3h1V383.1h1V383.6h1V384.0h1V378.8h1V380.7h1V382.4h1V384.0h1V374.5h1V374.5h1V374.5h1V378.3h1V380.4h1V381.9h1V380.6h1V382.4h1V384.0h1V384.6h1V382.1h1V383.8h1V384.8h1V385.2h1V385.4h1V374.4h1V374.4h1V381.1h1V382.7h1V383.8h1V381.0h1V382.6h1V384.1h1V385.3h1V382.4h1V384.0h1V385.4h1V381.7h1V383.6h1V385.2h1V385.0h1V374.0h1V374.0h1V374.0h1V374.0h1V374.0h1V378.6h1V380.7h1V379.3h1V381.4h1V383.4h1V384.3h1V384.7h1V374.3h1V374.3h1V374.3h1V374.3h1V377.8h1V379.7h1V381.1h1V382.2h1V383.0h1V383.6h1V380.7h1V382.4h1V384.0h1V385.0h1V385.1h1V379.2h1V380.9h1V382.6h1V384.1h1V374.9h1V374.9h1V379.9h1V381.8h1V383.1h1V383.9h1V379.8h1V381.8h1V383.6h1V385.2h1V381.3h1V383.3h1V385.1h1V385.1h1V386.0h1V374.2h1V374.2h1V374.2h1V379.9h1V381.6h1V381.3h1V382.9h1V384.3h1V384.7h1V385.0h1V381.0h1V383.2h1V385.0h1V382.6h1V384.1h1V384.7h1V374.4h1V374.4h1V374.4h1V374.4h1V374.4h1V376.7h1V378.9h1V380.4h1V381.8h1V382.7h1V383.4h1V383.9h1V384.4h1V374.0h1V374.0h1V374.0h1V374.0h1V374.0h1V374.0h1V374.0h1V375.7h1V377.7h1V379.3h1V380.6h1V381.6h1V382.4h1V383.0h1V383.6h1V378.6h1V380.5h1V382.3h1V374.3h1V374.3h1V374.3h1V378.3h1V380.4h1V381.9h1V380.8h1V382.5h1V384.0h1V384.6h1V384.9h1V381.6h1V383.5h1V385.2h1V385.2h1V385.5h1V374.4h1V374.4h1V380.8h1V382.5h1V383.6h1V379.5h1V381.6h1V383.5h1V385.0h1V381.5h1V383.5h1V385.1h1V381.1h1V383.2h1V385.1h1V385.2h1V374.0h1V374.0h1V374.0h1V378.3h1V380.3h1V381.8h1V382.8h1V380.4h1V382.2h1V383.9h1V384.8h1V385.1h1V374.5h1V374.5h1V374.5h1V374.5h1V374.5h1V377.4h1V379.3h1V380.7h1V381.9h1V382.7h1V379.7h1V381.7h1V383.6h1V384.6h1V384.8h1V378.5h1V380.4h1V382.2h1V383.9h1V374.5h1V374.5h1V374.5h1V379.6h1V381.5h1V382.8h1V380.2h1V382.1h1V383.8h1V385.0h1V380.6h1V382.9h1V384.9h1V384.9h1V385.5h1V374.5h1V374.5h1V374.5h1V374.5h1V379.2h1V381.0h1V382.5h1V383.5h1V384.1h1V384.6h1V382.6h1V384.1h1V385.3h1V381.1h1V383.2h1V385.1h1V374.5h1V374.5h1V374.5h1V374.5h1V376.2h1V378.5h1V380.3h1V379.8h1V381.8h1V383.3h1V383.9h1V384.3h1V384.6h1V374.4h1V374.4h1V374.4h1V374.4h1V374.4h1V375.1h1V377.3h1V379.0h1V380.3h1V381.0h1V382.2h1V382.9h1V383.5h1V383.9h1V384.2h1V379.2h1V380.9h1V382.6h1V374.1h1V374.1h1V374.1h1V374.1h1V377.9h1V380.1h1V381.1h1V382.7h1V383.6h1V384.2h1V384.6h1V381.8h1V383.6h1V384.4h1V385.1h1V385.0h1V374.5h1V374.5h1V374.5h1V379.0h1V381.0h1V381.1h1V382.7h1V384.1h1V384.5h1V381.6h1V383.5h1V384.5h1V382.8h1V384.2h1V385.0h1V385.1h1V374.1h1V374.1h1V374.1h1V374.1h1V376.2h1V378.5h1V380.3h1V380.8h1V382.5h1V383.3h1V383.9h1V384.3h1V374.0h1V374.0h1V374.0h1V374.0h1V374.0h1V374.0h1V374.0h1V375.1h1V377.3h1V379.0h1V380.3h1V381.4h1V382.2h1V382.9h1V383.5h1V378.5h1V380.4h1V382.2h1V383.9h1V374.1h1V374.1h1V374.1h1V377.9h1V380.1h1V381.7h1V379.9h1V381.9h1V383.7h1V384.3h1V381.0h1V383.1h1V384.2h1V384.8h1V385.4h1V374.3h1V374.3h1V374.3h1V379.1h1V381.1h1V380.6h1V382.4h1V384.0h1V384.4h1V382.1h1V383.8h1V385.2h1V384.9h1V381.1h1V383.2h1V385.1h1V374.3h1V374.3h1V374.3h1V374.3h1V376.2h1V378.5h1V380.3h1V379.6h1V381.7h1V383.3h1V383.9h1V384.3h1V384.6h1V374.4h1V374.4h1V374.4h1V374.4h1V374.4h1V374.4h1V375.1h1V377.3h1V379.0h1V380.3h1V381.4h1V382.2h1V382.9h1V383.5h1V378.6h1V380.5h1V382.3h1V383.9h1V374.7h1V374.7h1V374.7h1V377.9h1V380.1h1V381.7h1V379.6h1V381.7h1V383.6h1V384.6h1V381.9h1V383.7h1V384.8h1V384.6h1V384.9h1V374.9h1V374.9h1V381.6h1V382.9h1V381.1h1V382.7h1V384.2h1V385.1h1V381.1h1V383.2h1V385.1h1V385.5h1V376.0h1V382.1h1V383.5h1V384.3h1V374.3h1V374.3h1V381.6h1V382.9h1V381.8h1V383.6h1V384.8h1V385.1h1V382.3h1V383.5h1V384.7h1V385.5h1V385.5h1V385.6h1V386.0h1V375.0h1V375.0h1V381.6h1V382.9h1V381.9h1V383.7h1V384.8h1V385.1h1V381.1h1V382.7h1V384.2h1V385.5h1V382.5h1V384.1h1V385.4h1V386.0h1V376.4h1V382.1h1V383.5h1V384.3h1V382.9h1V384.3h1V385.3h1V385.4h1V381.6h1V383.1h1V384.4h1V385.6h1V380.6h1V382.9h1V384.9h1V386.0h1V374.0h1V374.0h1V381.6h1V382.9h1V382.1h1V383.8h1V384.8h1V385.1h1V381.9h1V383.7h1V385.3h1V385.5h1V375.4h1V382.1h1V383.5h1V384.3h1V375.0h1V375.0h1V381.6h1V382.9h1V382.3h1V383.9h1V384.8h1V385.1h1V382.5h1V384.0h1V385.4h1V385.5h1V385.5h1V385.6h1V386.0h1V374.5h1V374.5h1V381.6h1V382.9h1V382.6h1V383.8h1V384.8h1V385.1h1V381.8h1V383.6h1V385.2h1V385.5h1V381.1h1V382.7h1V384.2h1V385.5h1V377.6h1V382.1h1V383.5h1V384.3h1V380.9h1V383.1h1V385.0h1V385.4h1V381.6h1V383.5h1V385.2h1V386.0h1V381.0h1V383.2h1V385.0h1V374.9h1V374.9h1V381.6h1V382.9h1V381.2h1V383.3h1V384.8h1V385.1h1V381.6h1V383.5h1V385.2h1V385.5h1V375.8h1V382.1h1V383.5h1V384.3h1V374.4h1V374.4h1V381.6h1V382.9h1V381.3h1V383.3h1V384.8h1V385.1h1V382.2h1V383.9h1V385.3h1V385.5h1V385.5h1V385.6h1V386.0h1V375.1h1V375.1h1V381.6h1V382.9h1V382.7h1V384.2h1V384.8h1V385.1h1V381.3h1V382.9h1V384.3h1V385.5h1V382.0h1V383.8h1V385.3h1V386.0h1V377.4h1V382.1h1V383.5h1V384.3h1V382.1h1V383.8h1V385.3h1V385.4h1V380.6h1V382.3h1V383.9h1V385.4h1V380.5h1V382.8h1V384.9h1V385.3h1V374.4h1V374.4h1V374.4h1V379.1h1V381.1h1V379.8h1V381.8h1V383.6h1V384.6h1V381.3h1V383.3h1V385.1h1V381.6h1V383.5h1V384.9h1V384.7h1V374.1h1V374.1h1V374.1h1V374.1h1V374.1h1V376.2h1V378.5h1V379.5h1V381.6h1V382.6h1V383.3h1V383.9h1V374.3h1V374.3h1V374.3h1V374.3h1V374.3h1V375.1h1V377.3h1V379.0h1V380.3h1V381.4h1V380.1h1V382.0h1V383.5h1V383.9h1V384.2h1V378.8h1V380.6h1V382.4h1V384.0h1V374.6h1V374.6h1V374.6h1V374.6h1V377.9h1V380.1h1V380.8h1V382.5h1V383.6h1V384.2h1V381.3h1V383.3h1V385.1h1V384.9h1V385.3h1V374.4h1V374.4h1V374.4h1V379.7h1V381.5h1V381.1h1V382.7h1V384.2h1V384.7h1V385.0h1V381.7h1V383.6h1V384.8h1V381.4h1V383.4h1V384.6h1V374.0h1V374.0h1V374.0h1V374.0h1V376.5h1V378.7h1V380.4h1V380.0h1V381.9h1V383.4h1V383.9h1V384.3h1V384.6h1V374.2h1V374.2h1V374.2h1V374.2h1V398.3V398.3h-1V399.1h-1V399.7h-1V397.8h-1V388.3h-1V388.5h-1V388.8h-1V389.4h-1V391.2h-1V393.0h-1V392.3h-1V393.8h-1V396.7h-1V398.5h-1V398.7h-1V397.7h-1V398.5h-1V388.2h-1V389.6h-1V391.3h-1V387.9h-1V389.4h-1V391.2h-1V387.7h-1V388.3h-1V388.5h-1V390.0h-1V391.5h-1V391.5h-1V392.7h-1V397.4h-1V398.6h-1V397.7h-1V387.4h-1V387.9h-1V387.7h-1V389.4h-1V391.2h-1V388.6h-1V389.1h-1V390.4h-1V391.6h-1V393.0h-1V395.4h-1V398.2h-1V398.1h-1V398.7h-1V399.4h-1V388.8h-1V390.1h-1V392.1h-1V394.1h-1V388.7h-1V388.8h-1V389.1h-1V390.6h-1V392.2h-1V391.0h-1V392.9h-1V394.3h-1V395.3h-1V396.6h-1V399.4h-1V399.4h-1V399.3h-1V398.8h-1V398.4h-1V389.1h-1V389.3h-1V390.0h-1V391.5h-1V393.4h-1V394.3h-1V396.6h-1V399.7h-1V397.8h-1V398.0h-1V398.6h-1V398.7h-1V388.2h-1V387.8h-1V389.5h-1V390.9h-1V387.7h-1V389.3h-1V391.6h-1V388.3h-1V389.1h-1V391.1h-1V393.1h-1V391.7h-1V393.6h-1V398.9h-1V398.1h-1V398.9h-1V387.5h-1V387.8h-1V390.3h-1V392.4h-1V387.4h-1V389.0h-1V390.7h-1V391.7h-1V387.5h-1V387.4h-1V389.0h-1V390.8h-1V388.4h-1V389.4h-1V390.3h-1V396.2h-1V386.8h-1V387.6h-1V388.8h-1V390.5h-1V387.3h-1V388.5h-1V390.0h-1V391.2h-1V387.9h-1V388.0h-1V388.4h-1V390.5h-1V389.6h-1V391.1h-1V397.5h-1V397.5h-1V386.8h-1V387.2h-1V387.2h-1V387.3h-1V387.5h-1V389.1h-1V391.0h-1V387.8h-1V388.0h-1V389.5h-1V391.6h-1V390.0h-1V390.7h-1V398.1h-1V398.6h-1V388.4h-1V389.3h-1V390.3h-1V396.1h-1V387.3h-1V387.5h-1V389.2h-1V391.4h-1V387.8h-1V388.2h-1V389.4h-1V391.5h-1V390.2h-1V391.2h-1V397.6h-1V397.0h-1V387.8h-1V389.8h-1V391.4h-1V386.8h-1V387.5h-1V389.3h-1V390.9h-1V387.4h-1V387.7h-1V390.0h-1V391.7h-1V388.7h-1V389.0h-1V390.4h-1V395.1h-1V387.3h-1V388.6h-1V389.8h-1V391.9h-1V387.4h-1V387.5h-1V388.9h-1V391.5h-1V387.8h-1V388.1h-1V389.2h-1V390.0h-1V389.6h-1V391.4h-1V397.5h-1V397.3h-1V386.8h-1V387.2h-1V387.3h-1V387.2h-1V387.5h-1V388.6h-1V389.9h-1V387.7h-1V388.2h-1V389.1h-1V390.3h-1V390.1h-1V391.5h-1V397.5h-1V398.7h-1V388.4h-1V389.5h-1V390.8h-1V397.3h-1V387.3h-1V387.6h-1V388.9h-1V391.2h-1V387.7h-1V388.0h-1V388.9h-1V391.0h-1V390.1h-1V391.0h-1V399.7h-1V399.7h-1V386.8h-1V387.9h-1V389.7h-1V392.8h-1V387.2h-1V388.5h-1V389.9h-1V390.9h-1V387.3h-1V387.5h-1V388.4h-1V389.8h-1V388.4h-1V389.4h-1V391.1h-1V397.2h-1V386.8h-1V387.4h-1V388.5h-1V390.6h-1V387.3h-1V388.7h-1V389.8h-1V391.9h-1V387.6h-1V388.1h-1V389.0h-1V390.9h-1V390.1h-1V391.1h-1V398.1h-1V397.8h-1V386.8h-1V387.2h-1V387.3h-1V387.2h-1V388.0h-1V389.5h-1V390.7h-1V387.7h-1V387.9h-1V389.1h-1V391.4h-1V389.7h-1V391.3h-1V398.5h-1V397.4h-1V388.3h-1V389.0h-1V390.3h-1V397.4h-1V387.3h-1V387.9h-1V389.5h-1V391.9h-1V387.8h-1V388.6h-1V389.7h-1V391.3h-1V390.2h-1V391.2h-1V397.4h-1V397.8h-1V388.0h-1V388.3h-1V388.0h-1V389.2h-1V391.1h-1V388.3h-1V389.1h-1V391.4h-1V392.9h-1V391.2h-1V392.9h-1V395.0h-1V398.3h-1V398.2h-1V397.9h-1V389.0h-1V390.2h-1V392.6h-1V393.6h-1V389.1h-1V389.6h-1V390.4h-1V391.7h-1V392.6h-1V393.2h-1V396.4h-1V397.8h-1V399.4h-1V397.2h-1V398.3h-1V397.8h-1V398.6h-1V398.4h-1V388.1h-1V388.6h-1V388.7h-1V389.5h-1V390.7h-1V393.0h-1V392.8h-1V394.1h-1V396.9h-1V399.1h-1V398.1h-1V397.8h-1V399.6h-1V387.8h-1V389.8h-1V391.7h-1V387.8h-1V387.5h-1V388.9h-1V391.0h-1V388.5h-1V388.6h-1V390.5h-1V392.7h-1V392.0h-1V393.3h-1V398.9h-1V399.4h-1V398.7h-1V387.3h-1V388.0h-1V388.4h-1V389.8h-1V391.6h-1V388.4h-1V388.9h-1V390.7h-1V392.6h-1V391.5h-1V392.7h-1V394.2h-1V399.7h-1V398.6h-1V399.4h-1V388.8h-1V391.0h-1V392.5h-1V393.8h-1V389.1h-1V389.9h-1V390.9h-1V391.3h-1V393.0h-1V393.9h-1V395.9h-1V397.2h-1V398.3h-1V397.7h-1V397.9h-1V398.3h-1V398.9h-1V398.6h-1V398.6h-1V388.7h-1V388.7h-1V389.3h-1V390.2h-1V391.7h-1V392.2h-1V394.1h-1V396.5h-1V399.9h-1V398.3h-1V398.3h-1V397.7h-1V387.7h-1V387.8h-1V388.5h-1V390.1h-1V388.3h-1V389.4h-1V391.4h-1V388.2h-1V388.8h-1V390.4h-1V392.1h-1V392.1h-1V393.5h-1V398.0h-1V398.6h-1V398.6h-1V387.9h-1V387.8h-1V388.5h-1V389.2h-1V390.6h-1V388.4h-1V388.8h-1V389.2h-1V390.2h-1V391.5h-1V392.7h-1V394.5h-1V398.1h-1V399.1h-1V397.8h-1V397.6h-1V390.6h-1V391.8h-1V392.9h-1V388.5h-1V389.0h-1V389.1h-1V389.8h-1V390.5h-1V391.9h-1V392.5h-1V393.6h-1V394.9h-1V396.6h-1V398.6h-1V399.3h-1V397.7h-1V398.0h-1V397.3h-1V388.2h-1V388.7h-1V388.9h-1V389.7h-1V390.7h-1V393.0h-1V392.4h-1V394.5h-1V397.2h-1V397.5h-1V397.2h-1V399.0h-1V399.2h-1V387.7h-1V389.4h-1V391.6h-1V387.4h-1V388.9h-1V390.5h-1V388.3h-1V388.7h-1V389.5h-1V390.0h-1V391.6h-1V393.9h-1V397.8h-1V398.4h-1V397.5h-1V399.0h-1V387.2h-1V387.7h-1V387.7h-1V389.9h-1V392.6h-1V387.8h-1V388.8h-1V390.5h-1V392.8h-1V390.3h-1V390.9h-1V393.7h-1V398.5h-1V397.4h-1V398.6h-1V388.7h-1V390.8h-1V392.9h-1V394.7h-1V387.9h-1V388.1h-1V389.4h-1V391.3h-1V393.5h-1V390.0h-1V391.2h-1V391.7h-1V394.0h-1V396.2h-1V398.5h-1V399.2h-1V398.6h-1V399.2h-1V398.1h-1V387.8h-1V387.9h-1V388.8h-1V390.7h-1V391.8h-1V389.9h-1V390.8h-1V392.0h-1V395.0h-1V397.9h-1V399.5h-1V398.9h-1V387.8h-1V387.7h-1V389.5h-1V392.0h-1V387.6h-1V389.5h-1V391.7h-1V387.6h-1V389.4h-1V391.4h-1V393.3h-1V389.4h-1V390.3h-1V391.5h-1V398.2h-1V397.4h-1V387.3h-1V387.6h-1V387.5h-1V389.3h-1V390.9h-1V387.9h-1V388.2h-1V388.7h-1V390.4h-1V391.6h-1V390.7h-1V392.9h-1V393.9h-1V398.6h-1V399.4h-1V397.7h-1V390.2h-1V392.2h-1V394.3h-1V389.3h-1V389.7h-1V390.5h-1V391.1h-1V392.4h-1V392.9h-1V395.0h-1V397.5h-1V398.0h-1V397.6h-1V399.7h-1V398.4h-1V398.3h-1V399.1h-1V398.7h-1V388.6h-1V388.9h-1V389.3h-1V390.2h-1V391.2h-1V391.9h-1V394.4h-1V396.3h-1V399.5h-1V399.5h-1V399.2h-1V399.3h-1V399.5h-1V388.1h-1V388.6h-1V389.9h-1V387.7h-1V389.5h-1V391.8h-1V387.8h-1V388.0h-1V388.4h-1V390.2h-1V391.8h-1V391.3h-1V392.9h-1V398.2h-1V398.4h-1V398.7h-1V386.8h-1V387.7h-1V387.7h-1V389.6h-1V391.9h-1V387.6h-1V388.9h-1V391.2h-1V392.6h-1V388.8h-1V389.4h-1V390.6h-1V393.5h-1V397.8h-1V397.1h-1V388.8h-1V389.9h-1V392.0h-1V393.4h-1V387.6h-1V387.8h-1V388.8h-1V390.8h-1V392.6h-1V389.3h-1V390.0h-1V390.7h-1V391.7h-1V392.5h-1V394.5h-1V399.3h-1V398.2h-1V398.7h-1V398.2h-1V388.0h-1V388.6h-1V389.2h-1V391.2h-1V393.9h-1V392.5h-1V394.6h-1V398.0h-1V399.9h-1V399.7h-1V399.2h-1V398.1h-1V387.7h-1V387.7h-1V389.4h-1V390.7h-1V387.3h-1V388.7h-1V390.2h-1V387.5h-1V388.9h-1V390.3h-1V392.0h-1V389.3h-1V389.7h-1V391.7h-1V397.6h-1V398.2h-1V387.4h-1V387.5h-1V388.0h-1V389.3h-1V390.9h-1V388.0h-1V389.0h-1V390.8h-1V391.6h-1V390.5h-1V392.0h-1V394.3h-1V398.2h-1V397.9h-1V397.4h-1V388.8h-1V390.6h-1V391.8h-1V393.6h-1V388.6h-1V389.1h-1V389.6h-1V390.4h-1V391.9h-1V392.6h-1V393.9h-1V395.0h-1V397.3h-1V399.2h-1V398.0h-1V399.5h-1V398.9h-1V399.6h-1V398.4h-1V389.4h-1V389.8h-1V391.4h-1V392.0h-1V393.7h-1V396.9h-1V398.6h-1V398.8h-1V398.1h-1V398.1h-1V399.2h-1V399.3h-1V388.0h-1V387.7h-1V389.2h-1V391.3h-1V388.2h-1V389.2h-1V391.2h-1V388.1h-1V388.7h-1V390.5h-1V391.8h-1V390.9h-1V393.3h-1V399.4h-1V397.7h-1V399.5h-1V387.6h-1V388.4h-1V388.1h-1V389.1h-1V391.2h-1V388.0h-1V388.6h-1V389.2h-1V391.2h-1V393.1h-1V392.8h-1V395.4h-1V398.0h-1V399.3h-1V397.2h-1V397.7h-1V389.8h-1V391.3h-1V392.4h-1V389.4h-1V389.5h-1V390.7h-1V391.7h-1V392.0h-1V394.0h-1V394.6h-1V396.7h-1V397.3h-1V398.6h-1V399.2h-1V397.3h-1V397.9h-1V399.0h-1V399.2h-1V388.3h-1V388.8h-1V389.5h-1V390.1h-1V390.9h-1V392.6h-1V394.1h-1V396.9h-1V397.5h-1V398.6h-1V397.9h-1V397.2h-1V398.0h-1V387.6h-1V388.5h-1V389.9h-1V387.6h-1V389.4h-1V392.0h-1V388.2h-1V388.3h-1V388.9h-1V390.5h-1V392.9h-1V391.1h-1V393.5h-1V397.9h-1V399.0h-1V398.9h-1V387.4h-1V387.8h-1V388.0h-1V390.1h-1V391.8h-1V388.1h-1V388.5h-1V390.4h-1V392.1h-1V391.2h-1V392.9h-1V394.3h-1V397.4h-1V398.4h-1V397.1h-1V388.4h-1V389.7h-1V390.9h-1V392.6h-1V389.2h-1V389.6h-1V390.4h-1V390.9h-1V393.6h-1V393.2h-1V395.7h-1V396.4h-1V397.8h-1V398.5h-1V398.3h-1V399.0h-1V399.2h-1V398.5h-1V399.5h-1V389.2h-1V390.1h-1V391.0h-1V391.8h-1V394.4h-1V395.5h-1V398.8h-1V398.0h-1V398.3h-1V398.8h-1V399.6h-1V398.0h-1V388.1h-1V387.6h-1V389.4h-1V391.2h-1V388.2h-1V389.7h-1V391.1h-1V388.3h-1V388.8h-1V390.7h-1V392.1h-1V390.8h-1V393.3h-1V399.2h-1V398.2h-1V397.5h-1V387.4h-1V387.4h-1V387.4h-1V388.9h-1V390.2h-1V387.9h-1V387.9h-1V388.6h-1V390.3h-1V392.0h-1V390.0h-1V391.3h-1V393.4h-1V399.4h-1V397.7h-1V397.6h-1V389.8h-1V391.3h-1V393.1h-1V387.8h-1V387.9h-1V388.1h-1V389.1h-1V390.2h-1V392.1h-1V389.5h-1V390.2h-1V391.6h-1V392.4h-1V394.5h-1V395.5h-1V398.2h-1V399.4h-1V398.6h-1V388.0h-1V388.6h-1V388.9h-1V389.8h-1V391.7h-1V393.5h-1V393.3h-1V395.6h-1V398.0h-1V399.3h-1V399.5h-1V397.4h-1V397.8h-1V387.5h-1V388.5h-1V390.3h-1V388.0h-1V389.0h-1V390.1h-1V387.5h-1V387.7h-1V389.1h-1V391.2h-1V393.7h-1V389.2h-1V390.3h-1V391.8h-1V398.4h-1V399.3h-1V386.8h-1V387.7h-1V387.8h-1V388.7h-1V390.8h-1V387.7h-1V389.2h-1V390.8h-1V392.3h-1V388.9h-1V389.8h-1V391.7h-1V392.9h-1V397.5h-1V398.2h-1V388.5h-1V390.2h-1V391.4h-1V393.2h-1V387.8h-1V388.0h-1V389.3h-1V390.9h-1V393.5h-1V389.6h-1V390.4h-1V390.9h-1V391.6h-1V393.9h-1V395.2h-1V399.0h-1V398.1h-1V397.2h-1V398.6h-1V388.5h-1V388.7h-1V389.4h-1V391.0h-1V392.5h-1V392.2h-1V394.7h-1V398.9h-1V398.4h-1V398.0h-1V398.7h-1V399.9h-1V388.0h-1V387.5h-1V388.9h-1V390.7h-1V387.6h-1V389.4h-1V391.7h-1V387.8h-1V388.6h-1V390.0h-1V392.2h-1V389.3h-1V390.3h-1V392.6h-1V399.1h-1V398.7h-1V387.5h-1V388.3h-1V387.8h-1V389.2h-1V391.1h-1V388.6h-1V389.2h-1V390.8h-1V393.4h-1V392.9h-1V395.7h-1V397.6h-1V398.2h-1V397.6h-1V397.7h-1V389.0h-1V390.6h-1V392.4h-1V395.1h-1V388.6h-1V389.0h-1V389.6h-1V391.2h-1V393.4h-1V391.0h-1V391.9h-1V394.5h-1V395.4h-1V397.0h-1V399.5h-1V399.3h-1V399.3h-1V398.0h-1V399.5h-1V388.7h-1V389.6h-1V390.3h-1V390.9h-1V392.3h-1V393.8h-1V396.4h-1V398.4h-1V399.2h-1V399.1h-1V398.0h-1V398.1h-1V388.0h-1V388.0h-1V388.8h-1V390.7h-1V387.7h-1V388.8h-1V390.3h-1V388.7h-1V389.5h-1V390.5h-1V391.9h-1V393.7h-1V399.8h-1V398.7h-1V398.9h-1V399.3h-1V387.6h-1V387.5h-1V387.6h-1V389.8h-1V391.8h-1V388.3h-1V388.6h-1V389.4h-1V391.4h-1V393.6h-1V392.7h-1V395.4h-1V398.6h-1V398.1h-1V398.2h-1V397.5h-1V390.4h-1V392.0h-1V394.7h-1V389.1h-1V389.2h-1V389.6h-1V390.8h-1V391.4h-1V392.6h-1V393.2h-1V395.4h-1V398.5h-1V397.7h-1V398.0h-1V399.5h-1V398.3h-1V400.0h-1V398.3h-1V388.2h-1V388.5h-1V388.8h-1V389.7h-1V390.3h-1V391.6h-1V392.6h-1V394.1h-1V396.6h-1V397.8h-1V397.8h-1V398.0h-1V398.4h-1V388.1h-1V388.6h-1V390.0h-1V388.5h-1V388.7h-1V390.6h-1V388.0h-1V388.4h-1V388.9h-1V390.1h-1V391.2h-1V391.5h-1V393.5h-1V398.6h-1V398.4h-1V398.0h-1V387.3h-1V387.4h-1V387.9h-1V389.5h-1V391.3h-1V388.2h-1V389.2h-1V390.7h-1V392.0h-1V391.3h-1V392.5h-1V394.5h-1V399.1h-1V397.9h-1V398.1h-1V388.7h-1V390.4h-1V392.5h-1V393.9h-1V388.5h-1V389.0h-1V389.2h-1V390.7h-1V391.8h-1V391.8h-1V393.0h-1V394.3h-1V395.8h-1V398.6h-1V399.0h-1V399.5h-1V397.5h-1V397.2h-1V398.4h-1V388.5h-1V388.7h-1V389.5h-1V391.2h-1V393.6h-1V392.4h-1V393.9h-1V397.4h-1V399.8h-1V398.7h-1V397.6h-1V399.5h-1V388.0h-1V388.0h-1V389.8h-1V392.2h-1V387.9h-1V389.0h-1V390.7h-1V388.6h-1V389.5h-1V390.6h-1V391.6h-1V393.6h-1V399.2h-1V398.2h-1V398.1h-1V399.4h-1V388.3h-1V387.2h-1V387.9h-1V389.8h-1V391.6h-1V387.4h-1V387.4h-1V388.6h-1V390.3h-1V391.7h-1V387.3h-1V387.7h-1V389.5h-1V391.2h-1V387.3h-1V388.1h-1V389.4h-1V390.0h-1V391.9h-1V387.3h-1V387.4h-1V387.4h-1V388.3h-1V389.6h-1V391.5h-1V388.0h-1V388.4h-1V389.3h-1V389.9h-1V390.9h-1V392.7h-1V398.1h-1V399.9h-1V397.6h-1V387.4h-1V387.6h-1V387.8h-1V389.3h-1V391.7h-1V393.9h-1V390.2h-1V392.8h-1V398.3h-1V399.1h-1V398.1h-1V399.5h-1V399.4h-1V387.4h-1V388.6h-1V390.4h-1V387.6h-1V389.4h-1V390.9h-1V387.3h-1V387.5h-1V388.5h-1V390.1h-1V392.2h-1V388.1h-1V389.0h-1V390.9h-1V398.7h-1V399.8h-1V387.3h-1V387.3h-1V387.6h-1V389.2h-1V390.5h-1V387.6h-1V388.5h-1V390.5h-1V391.9h-1V387.4h-1V387.4h-1V388.9h-1V390.8h-1V387.5h-1V387.3h-1V388.6h-1V389.7h-1V391.2h-1V393.0h-1V387.4h-1V387.4h-1V388.1h-1V389.3h-1V390.9h-1V388.5h-1V388.7h-1V389.3h-1V390.5h-1V391.4h-1V394.1h-1V398.5h-1V397.9h-1V398.8h-1V387.4h-1V387.3h-1V387.4h-1V388.8h-1V390.7h-1V391.7h-1V389.0h-1V389.5h-1V391.1h-1V392.3h-1V399.3h-1V397.9h-1V397.4h-1V387.6h-1V389.2h-1V391.1h-1V387.3h-1V387.6h-1V389.2h-1V391.1h-1V387.5h-1V388.8h-1V390.8h-1V392.9h-1V388.2h-1V389.6h-1V390.5h-1V399.7h-1V398.3h-1V386.8h-1V386.8h-1V386.8h-1V387.6h-1V388.9h-1V390.4h-1V392.5h-1V386.8h-1V386.8h-1V386.8h-1V386.8h-1V387.5h-1V388.7h-1V390.4h-1V392.1h-1V387.3h-1V387.3h-1V387.4h-1V387.3h-1V388.2h-1V389.5h-1V391.0h-1V392.5h-1V387.9h-1V388.3h-1V388.6h-1V389.6h-1V390.5h-1V391.8h-1V397.6h-1V399.3h-1V386.8h-1V387.5h-1V389.3h-1V390.6h-1V389.8h-1V390.8h-1V392.4h-1V386.8h-1V386.8h-1V386.8h-1V387.1h-1V388.2h-1V389.2h-1V391.0h-1V392.3h-1V387.2h-1V387.3h-1V387.4h-1V387.4h-1V388.1h-1V389.1h-1V391.1h-1V392.3h-1V388.1h-1V388.4h-1V388.5h-1V389.6h-1V390.5h-1V391.8h-1V398.4h-1V398.2h-1V386.8h-1V386.8h-1V387.1h-1V388.0h-1V388.7h-1V389.8h-1V390.9h-1V392.4h-1V386.8h-1V386.8h-1V386.8h-1V387.5h-1V389.3h-1V390.5h-1V392.7h-1V387.3h-1V387.2h-1V387.4h-1V387.4h-1V388.5h-1V390.2h-1V391.5h-1V392.5h-1V387.9h-1V388.2h-1V388.6h-1V389.1h-1V390.0h-1V391.9h-1V399.3h-1V399.1h-1V386.8h-1V386.8h-1V386.8h-1V387.1h-1V388.3h-1V389.5h-1V391.1h-1V392.8h-1V386.8h-1V386.8h-1V386.8h-1V387.2h-1V388.4h-1V389.5h-1V391.4h-1V392.8h-1V387.2h-1V387.3h-1V387.4h-1V387.5h-1V389.1h-1V391.3h-1V393.2h-1V388.0h-1V388.3h-1V388.8h-1V389.2h-1V390.0h-1V391.1h-1V398.7h-1V398.4h-1V386.8h-1V386.8h-1V386.8h-1V386.8h-1V387.5h-1V389.3h-1V391.3h-1V392.4h-1V386.8h-1V386.8h-1V387.0h-1V387.7h-1V388.5h-1V389.6h-1V390.8h-1V391.8h-1V387.2h-1V387.4h-1V387.4h-1V387.3h-1V388.6h-1V389.9h-1V390.9h-1V392.7h-1V388.5h-1V388.8h-1V389.5h-1V390.5h-1V391.2h-1V399.0h-1V399.7h-1V386.8h-1V386.8h-1V386.8h-1V387.2h-1V388.2h-1V389.3h-1V390.4h-1V391.5h-1V386.8h-1V386.8h-1V387.1h-1V388.2h-1V389.2h-1V390.5h-1V391.5h-1V393.5h-1V387.2h-1V387.2h-1V387.3h-1V387.4h-1V388.8h-1V390.1h-1V391.4h-1V393.7h-1V388.1h-1V388.5h-1V388.5h-1V389.2h-1V390.3h-1V391.7h-1V399.6h-1V399.2h-1V386.8h-1V386.8h-1V387.3h-1V388.5h-1V389.7h-1V391.5h-1V392.4h-1V386.8h-1V386.8h-1V387.1h-1V387.9h-1V388.8h-1V390.1h-1V391.7h-1V392.2h-1V387.3h-1V387.5h-1V388.9h-1V391.3h-1V388.5h-1V389.4h-1V390.7h-1V393.0h-1V388.1h-1V388.2h-1V388.9h-1V389.3h-1V390.4h-1V391.5h-1V397.6h-1V399.1h-1V386.8h-1V386.8h-1V387.0h-1V387.7h-1V388.7h-1V390.0h-1V390.7h-1V392.4h-1V386.8h-1V387.3h-1V388.8h-1V389.8h-1V389.5h-1V390.2h-1V392.0h-1V387.2h-1V387.2h-1V387.2h-1V387.3h-1V387.7h-1V389.1h-1V391.2h-1V393.3h-1V388.1h-1V388.5h-1V388.8h-1V389.3h-1V389.8h-1V391.3h-1V399.5h-1V398.6h-1V386.8h-1V386.8h-1V386.8h-1V386.8h-1V387.4h-1V389.3h-1V390.9h-1V392.6h-1V386.8h-1V386.8h-1V386.8h-1V386.8h-1V387.4h-1V388.8h-1V390.4h-1V391.7h-1V387.3h-1V387.4h-1V387.4h-1V387.4h-1V388.8h-1V390.4h-1V392.9h-1V388.0h-1V388.4h-1V388.6h-1V389.5h-1V390.3h-1V391.6h-1V398.6h-1V398.6h-1V386.8h-1V386.8h-1V386.8h-1V387.1h-1V388.1h-1V389.4h-1V390.1h-1V391.1h-1V386.8h-1V387.4h-1V389.0h-1V391.0h-1V388.8h-1V389.3h-1V390.9h-1V391.9h-1V387.3h-1V387.6h-1V389.1h-1V391.0h-1V388.8h-1Z"/><path d="M309 434.0V434.0h1V434.0h1V434.0h1V434.0h1V434.0h1V434.0h1V434.0h1V434.0h1V434.0h1V434.0h1V434.0h1V434.0h1V434.0h1V434.0h1V434.0h1V434.0h1V434.0h1V434.0h1V434.0h1V434.0h1V434.0h1V434.0h1V434.0h1V434.0h1V434.0h1V434.0h1V434.0h1V434.0h1V434.0h1V434.0h1V434.0h1V434.0h1V434.0h1V434.0h1V434.0h1V434.0h1V434.0h1V434.0h1V434.0h1V434.0h1V434.0h1V434.0h1V434.0h1V434.0h1V434.0h1V434.0h1V434.0h1V434.0h1V434.0h1V434.0h1V434.0h1V434.0h1V434.0h1V434.0h1V434.0h1V434.0h1V434.0h1V434.0h1V434.0h1V434.0h1V434.0h1V434.0h1V434.0h1V434.0h1V434.0h1V434.0h1V434.0h1V434.0h1V434.0h1V434.0h1V434.0h1V434.0h1V434.0h1V434.0h1V434.0h1V434.0h1V434.0h1V434.0h1V434.0h1V434.0h1V434.0h1V434.0h1V434.0h1V434.0h1V434.0h1V434.0h1V434.0h1V434.0h1V434.0h1V434.0h1V434.0h1V434.0h1V434.0h1V434.0h1V434.0h1V434.0h1V434.0h1V434.0h1V434.0h1V434.0h1V434.0h1V434.0h1V434.0h1V434.0h1V434.0h1V434.0h1V434.0h1V434.0h1V434.0h1V434.0h1V434.0h1V434.0h1V434.0h1V434.0h1V434.0h1V434.0h1V434.0h1V434.0h1V434.0h1V434.0h1V434.0h1V434.0h1V434.0h1V434.0h1V434.0h1V434.0h1V434.0h1V434.0h1V434.0h1V434.0h1V434.0h1V434.0h1V434.0h1V434.0h1V434.0h1V434.0h1V434.0h1V434.0h1V434.0h1V434.0h1V434.0h1V434.0h1V434.0h1V434.0h1V434.0h1V434.0h1V434.0h1V434.0h1V434.0h1V434.0h1V434.0h1V434.0h1V434.0h1V434.0h1V434.0h1V434.0h1V434.0h1V434.0h1V434.0h1V434.0h1V434.0h1V434.0h1V434.0h1V434.0h1V434.0h1V434.0h1V434.0h1V434.0h1V434.0h1V434.0h1V434.0h1V434.0h1V434.0h1V434.0h1V434.0h1V434.0h1V434.0h1V434.0h1V434.0h1V434.0h1V434.0h1V434.0h1V434.0h1V434.0h1V434.0h1V434.0h1V434.0h1V434.0h1V434.0h1V434.0h1V434.0h1V434.0h1V434.0h1V434.0h1V434.0h1V434.0h1V434.0h1V434.0h1V434.0h1V434.0h1V434.0h1V434.0h1V434.0h1V434.0h1V434.0h1V434.0h1V434.0h1V434.0h1V434.0h1V434.0h1V434.0h1V434.0h1V434.0h1V434.0h1V434.0h1V434.0h1V434.0h1V434.0h1V434.0h1V434.0h1V434.0h1V434.0h1V434.0h1V434.0h1V434.0h1V434.0h1V434.0h1V434.0h1V434.0h1V434.0h1V434.0h1V434.0h1V434.0h1V434.0h1V434.0h1V434.0h1V434.0h1V434.0h1V434.0h1V434.0h1V434.0h1V434.0h1V434.0h1V434.0h1V434.0h1V434.0h1V434.0h1V434.0h1V434.0h1V434.0h1V434.0h1V434.0h1V434.0h1V426.1h1V425.9h1V427.5h1V427.6h1V427.5h1V427.7h1V427.7h1V428.2h1V428.0h1V428.0h1V428.2h1V428.4h1V428.2h1V428.7h1V428.9h1V428.8h1V429.1h1V428.8h1V429.3h1V429.3h1V429.4h1V429.4h1V429.3h1V429.7h1V429.8h1V429.8h1V430.8h1V431.1h1V432.4h1V433.7h1V432.9h1V424.9h1V424.7h1V426.6h1V426.6h1V426.5h1V426.9h1V427.0h1V426.8h1V427.1h1V427.1h1V427.1h1V427.6h1V427.5h1V427.8h1V427.6h1V427.9h1V428.0h1V427.8h1V428.2h1V428.2h1V428.3h1V428.6h1V428.6h1V428.5h1V429.9h1V430.0h1V432.2h1V433.6h1V433.9h1V433.6h1V432.9h1V426.2h1V426.2h1V427.6h1V427.5h1V427.6h1V427.7h1V427.7h1V427.4h1V427.3h1V427.4h1V427.4h1V427.7h1V427.3h1V427.6h1V427.5h1V427.4h1V427.4h1V427.4h1V427.8h1V427.7h1V427.3h1V427.4h1V427.8h1V427.7h1V427.5h1V427.7h1V429.0h1V428.7h1V432.2h1V433.6h1V433.9h1V433.6h1V432.9h1V424.9h1V424.9h1V426.3h1V425.9h1V426.3h1V426.3h1V425.9h1V425.9h1V426.1h1V426.3h1V426.0h1V426.0h1V426.3h1V426.2h1V426.0h1V426.0h1V426.0h1V426.1h1V426.3h1V426.0h1V426.0h1V426.1h1V427.8h1V427.9h1V432.4h1V433.7h1V432.9h1V426.8h1V427.0h1V428.5h1V428.2h1V432.4h1V433.7h1V432.9h1V427.4h1V427.5h1V428.7h1V428.8h1V432.4h1V433.7h1V432.9h1V424.7h1V424.9h1V425.9h1V426.1h1V426.3h1V425.9h1V426.2h1V426.3h1V426.2h1V426.1h1V426.0h1V426.3h1V426.3h1V426.3h1V426.2h1V426.2h1V426.4h1V426.2h1V426.1h1V427.9h1V427.7h1V432.4h1V433.7h1V432.9h1V425.3h1V425.4h1V426.8h1V427.3h1V427.2h1V427.1h1V427.4h1V427.5h1V427.8h1V427.9h1V427.9h1V427.7h1V427.8h1V428.3h1V428.0h1V428.5h1V428.4h1V428.3h1V428.7h1V429.6h1V429.9h1V432.4h1V433.7h1V432.9h1V425.7h1V425.8h1V427.1h1V427.3h1V426.9h1V426.9h1V427.0h1V427.1h1V426.9h1V427.3h1V427.2h1V427.1h1V427.3h1V427.3h1V427.0h1V428.6h1V428.4h1V432.2h1V433.6h1V433.9h1V433.6h1V432.9h1V424.9h1V424.8h1V426.6h1V426.7h1V426.4h1V426.8h1V426.7h1V426.8h1V427.1h1V427.3h1V427.5h1V427.2h1V427.7h1V427.6h1V427.6h1V428.0h1V427.9h1V428.1h1V428.0h1V428.2h1V428.3h1V428.5h1V428.5h1V428.7h1V430.0h1V430.0h1V432.4h1V433.7h1V432.9h1V427.6h1V427.5h1V427.7h1V429.1h1V429.4h1V432.4h1V433.7h1V432.9h1V424.9h1V424.8h1V426.6h1V426.5h1V426.8h1V426.7h1V427.0h1V427.1h1V426.9h1V427.1h1V427.1h1V427.2h1V427.7h1V427.6h1V427.9h1V429.2h1V429.0h1V432.4h1V433.7h1V432.9h1V425.6h1V425.8h1V427.1h1V426.8h1V426.9h1V427.3h1V426.9h1V427.2h1V427.0h1V427.2h1V426.9h1V426.9h1V427.2h1V426.8h1V427.0h1V426.9h1V427.3h1V427.3h1V426.9h1V428.8h1V428.5h1V432.2h1V433.6h1V433.9h1V433.6h1V426.5h1V426.4h1V426.4h1V428.1h1V428.5h1V432.2h1V433.6h1V433.9h1V433.6h1V425.9h1V425.8h1V427.5h1V427.2h1V427.1h1V427.1h1V427.2h1V427.2h1V427.2h1V427.3h1V427.4h1V427.2h1V427.2h1V427.2h1V427.4h1V427.1h1V427.3h1V427.1h1V427.5h1V427.1h1V427.2h1V427.5h1V427.2h1V427.5h1V428.9h1V428.8h1V432.4h1V433.7h1V432.9h1V425.3h1V425.1h1V426.7h1V426.9h1V426.9h1V427.0h1V427.3h1V427.6h1V427.4h1V427.4h1V427.8h1V427.7h1V427.7h1V427.8h1V428.3h1V428.2h1V428.5h1V428.6h1V428.3h1V428.6h1V428.6h1V428.8h1V429.0h1V430.2h1V430.2h1V432.2h1V433.6h1V433.9h1V433.6h1V432.9h1V426.4h1V426.3h1V427.4h1V427.6h1V427.5h1V427.4h1V427.7h1V427.5h1V427.8h1V427.4h1V427.7h1V427.7h1V427.3h1V427.6h1V427.7h1V427.4h1V427.5h1V427.4h1V427.6h1V427.5h1V427.3h1V427.5h1V427.3h1V427.7h1V428.8h1V429.1h1V432.4h1V433.7h1V432.9h1V426.0h1V426.4h1V427.9h1V428.2h1V432.2h1V433.6h1V433.9h1V433.6h1V425.9h1V425.9h1V427.3h1V427.5h1V427.2h1V427.4h1V427.2h1V427.2h1V427.2h1V427.2h1V427.1h1V427.1h1V426.9h1V426.8h1V426.7h1V426.7h1V427.0h1V426.7h1V426.7h1V426.6h1V426.9h1V426.4h1V426.4h1V426.7h1V426.5h1V426.5h1V428.0h1V428.1h1V432.2h1V433.6h1V433.9h1V433.6h1V432.9h1V426.3h1V425.9h1V427.6h1V427.9h1V432.4h1V433.7h1V432.9h1V425.9h1V426.0h1V427.1h1V427.3h1V427.1h1V427.2h1V426.8h1V427.0h1V426.8h1V426.9h1V427.0h1V426.7h1V426.7h1V426.7h1V426.9h1V426.9h1V426.6h1V426.5h1V426.5h1V426.6h1V426.7h1V426.5h1V427.8h1V428.2h1V432.4h1V433.7h1V432.9h1V425.7h1V425.5h1V427.2h1V427.5h1V427.4h1V427.7h1V427.5h1V427.8h1V427.8h1V427.8h1V428.1h1V428.1h1V428.4h1V428.5h1V428.4h1V428.6h1V428.9h1V428.6h1V428.8h1V429.0h1V429.1h1V429.4h1V429.1h1V429.6h1V429.6h1V429.6h1V430.6h1V430.5h1V432.2h1V433.6h1V433.9h1V433.6h1V432.9h1V427.1h1V427.2h1V427.0h1V428.4h1V428.8h1V432.2h1V433.6h1V433.9h1V433.6h1V432.9h1V427.6h1V427.4h1V428.9h1V428.6h1V432.4h1V433.7h1V432.9h1V426.0h1V426.1h1V427.2h1V427.5h1V427.4h1V427.2h1V427.0h1V427.1h1V427.0h1V426.9h1V427.1h1V426.8h1V426.8h1V427.0h1V426.9h1V426.7h1V426.9h1V426.9h1V426.5h1V426.7h1V426.6h1V426.5h1V426.4h1V426.7h1V428.1h1V428.3h1V432.2h1V433.6h1V433.9h1V433.6h1V432.9h1V426.7h1V426.7h1V426.8h1V428.2h1V428.3h1V432.4h1V433.7h1V432.9h1V425.8h1V425.6h1V427.2h1V427.3h1V427.3h1V427.5h1V427.4h1V427.8h1V427.6h1V427.7h1V427.8h1V428.0h1V428.2h1V428.0h1V427.9h1V429.5h1V429.6h1V432.4h1V433.7h1V432.9h1V425.8h1V425.9h1V427.4h1V427.2h1V427.5h1V427.1h1V427.3h1V427.4h1V427.1h1V427.3h1V427.2h1V427.2h1V427.0h1V426.9h1V426.7h1V427.1h1V426.6h1V427.0h1V426.9h1V428.2h1V428.3h1V432.2h1V433.6h1V433.9h1V433.6h1V425.3h1V425.1h1V426.9h1V426.6h1V426.9h1V426.9h1V427.2h1V427.3h1V427.0h1V427.3h1V427.4h1V427.1h1V427.5h1V427.7h1V427.7h1V427.6h1V427.4h1V427.8h1V427.7h1V427.6h1V428.1h1V428.0h1V428.0h1V428.0h1V429.5h1V429.4h1V432.4h1V433.7h1V432.9h1V425.5h1V425.6h1V426.9h1V426.8h1V426.8h1V426.8h1V426.5h1V426.6h1V426.6h1V426.7h1V426.4h1V426.6h1V426.5h1V426.3h1V426.2h1V426.0h1V426.1h1V426.0h1V425.9h1V426.0h1V426.0h1V426.3h1V427.8h1V427.9h1V432.2h1V433.6h1V433.9h1V433.6h1V425.6h1V425.7h1V427.2h1V427.4h1V427.2h1V427.2h1V427.4h1V427.7h1V427.4h1V427.4h1V427.7h1V427.5h1V427.8h1V427.6h1V427.9h1V428.1h1V428.1h1V428.1h1V427.9h1V427.9h1V428.1h1V428.3h1V428.5h1V428.5h1V429.7h1V429.6h1V432.4h1V433.7h1V432.9h1V425.8h1V425.6h1V427.1h1V426.9h1V426.8h1V427.1h1V427.2h1V427.0h1V426.8h1V426.9h1V427.0h1V426.5h1V426.5h1V426.7h1V426.8h1V426.4h1V426.5h1V426.7h1V426.5h1V426.3h1V426.2h1V426.3h1V426.2h1V426.4h1V426.3h1V426.0h1V426.2h1V426.3h1V426.0h1V426.2h1V426.1h1V425.9h1V427.5h1V427.5h1V432.2h1V433.6h1V433.9h1V433.6h1V432.9h1V426.5h1V427.0h1V426.8h1V428.3h1V428.3h1V432.2h1V433.6h1V433.9h1V433.6h1V432.9h1V425.0h1V424.6h1V426.1h1V426.3h1V426.2h1V425.7h1V426.1h1V426.0h1V425.7h1V425.7h1V425.7h1V425.6h1V425.9h1V425.9h1V425.4h1V425.4h1V425.8h1V425.7h1V425.6h1V425.2h1V425.5h1V425.3h1V425.1h1V425.2h1V425.0h1V425.3h1V425.3h1V425.4h1V424.9h1V425.2h1V424.8h1V424.8h1V427.0h1V426.6h1V432.4h1V433.7h1V432.9h1V425.4h1V425.2h1V427.0h1V426.9h1V427.4h1V427.5h1V427.3h1V427.7h1V427.5h1V427.6h1V427.6h1V427.9h1V427.9h1V428.0h1V428.1h1V428.3h1V428.3h1V428.5h1V428.7h1V428.8h1V428.8h1V428.7h1V429.1h1V429.0h1V430.1h1V430.2h1V432.4h1V433.7h1V432.9h1V424.6h1V424.5h1V426.2h1V426.0h1V425.7h1V425.6h1V426.0h1V425.9h1V425.8h1V425.8h1V425.6h1V425.6h1V425.6h1V425.7h1V425.7h1V425.7h1V425.3h1V425.2h1V425.5h1V425.3h1V425.0h1V425.0h1V425.1h1V425.3h1V426.8h1V426.8h1V432.4h1V433.7h1V432.9h1V426.2h1V426.5h1V427.8h1V428.0h1V432.4h1V433.7h1V432.9h1V425.2h1V425.1h1V426.7h1V426.7h1V426.7h1V426.7h1V426.8h1V426.6h1V426.4h1V426.5h1V426.4h1V426.5h1V426.4h1V426.4h1V426.5h1V428.3h1V428.3h1V432.2h1V433.6h1V433.9h1V433.6h1V432.9h1V426.1h1V426.2h1V427.5h1V428.0h1V427.7h1V428.0h1V428.0h1V428.2h1V428.2h1V428.3h1V428.0h1V428.3h1V428.4h1V428.6h1V428.6h1V428.5h1V428.7h1V428.8h1V428.6h1V428.8h1V428.6h1V428.6h1V428.9h1V428.8h1V430.0h1V430.1h1V432.4h1V433.7h1V432.9h1V424.9h1V425.0h1V426.8h1V426.5h1V426.7h1V426.8h1V427.2h1V426.9h1V427.3h1V427.3h1V427.5h1V427.3h1V427.8h1V427.5h1V427.7h1V427.8h1V427.9h1V428.0h1V428.4h1V429.7h1V429.8h1V432.2h1V433.6h1V433.9h1V433.6h1V432.9h1V426.1h1V426.3h1V427.9h1V427.7h1V427.8h1V427.9h1V428.1h1V428.0h1V428.1h1V428.4h1V428.3h1V428.7h1V428.7h1V428.7h1V429.0h1V428.7h1V428.9h1V429.0h1V429.3h1V430.5h1V434.0h1V434.0h1V434.0h1V434.0h1V426.4h1V426.5h1V426.7h1V426.8h1V426.9h1V427.0h1V427.2h1V427.3h1V427.4h1V427.5h1V427.7h1V427.8h1V427.9h1V428.1h1V428.2h1V428.3h1V428.4h1V428.6h1V428.7h1V428.8h1V428.9h1V429.1h1V429.2h1V429.3h1V429.5h1V429.6h1V429.7h1V429.8h1V430.0h1V430.1h1V430.2h1V430.3h1V430.5h1V430.6h1V430.7h1V430.8h1V431.0h1V431.1h1V431.2h1V431.4h1V431.5h1V431.6h1V431.7h1V431.9h1V432.0h1V432.1h1V432.2h1V432.4h1V432.5h1V432.6h1V432.8h1V432.9h1V433.0h1V433.1h1V433.3h1V433.4h1V433.5h1V433.6h1V433.8h1V433.9h1V434.0h1V434.0h1V434.0h1V434.0h1V424.4h1V424.4h1V426.4h1V426.5h1V432.4h1V433.7h1V423.5h1V423.3h1V424.9h1V425.0h1V425.3h1V425.5h1V425.6h1V425.2h1V425.6h1V425.6h1V425.7h1V426.0h1V426.2h1V426.3h1V426.0h1V426.5h1V427.7h1V428.1h1V432.4h1V433.7h1V422.9h1V423.0h1V424.2h1V424.1h1V424.1h1V424.4h1V424.1h1V424.1h1V424.5h1V424.2h1V424.1h1V424.1h1V424.1h1V424.4h1V424.1h1V426.4h1V426.5h1V432.4h1V433.7h1V423.0h1V423.1h1V424.3h1V424.5h1V424.3h1V424.2h1V424.5h1V424.4h1V424.3h1V424.4h1V424.4h1V424.3h1V424.4h1V424.5h1V424.3h1V424.3h1V424.0h1V424.2h1V424.5h1V424.4h1V424.1h1V424.2h1V424.1h1V424.0h1V424.1h1V424.5h1V426.1h1V426.3h1V432.4h1V433.7h1V423.4h1V423.4h1V424.7h1V424.4h1V424.6h1V424.5h1V424.8h1V424.6h1V424.7h1V424.8h1V424.5h1V424.7h1V424.8h1V424.4h1V424.6h1V424.8h1V424.9h1V424.5h1V424.6h1V424.8h1V424.6h1V424.5h1V424.6h1V424.7h1V426.6h1V426.5h1V432.4h1V433.7h1V432.9h1V422.7h1V422.7h1V424.3h1V424.0h1V424.4h1V424.4h1V424.2h1V424.0h1V424.5h1V424.4h1V424.5h1V424.3h1V424.4h1V424.4h1V424.1h1V426.2h1V426.1h1V432.4h1V433.7h1V432.9h1V423.8h1V423.9h1V426.3h1V426.2h1V432.4h1V433.7h1V432.9h1V421.6h1V422.0h1V423.1h1V423.2h1V422.9h1V423.1h1V422.7h1V422.8h1V423.1h1V423.0h1V422.9h1V422.7h1V422.7h1V422.6h1V422.8h1V422.4h1V422.7h1V422.4h1V422.4h1V422.5h1V422.4h1V422.4h1V422.5h1V422.3h1V422.4h1V422.3h1V424.4h1V424.3h1V432.4h1V433.7h1V423.1h1V423.0h1V424.8h1V424.5h1V424.6h1V425.0h1V424.9h1V425.2h1V425.3h1V425.1h1V425.1h1V425.3h1V425.8h1V425.7h1V425.6h1V425.6h1V425.8h1V426.3h1V426.0h1V426.4h1V426.5h1V426.7h1V426.6h1V426.8h1V428.2h1V428.3h1V432.4h1V433.7h1V423.0h1V422.9h1V424.2h1V424.1h1V424.5h1V424.5h1V424.0h1V424.2h1V424.3h1V424.0h1V424.2h1V424.2h1V424.1h1V424.0h1V423.8h1V424.1h1V423.7h1V423.7h1V423.8h1V423.6h1V423.5h1V423.9h1V423.6h1V425.6h1V425.6h1V432.4h1V433.7h1V421.6h1V422.1h1V423.2h1V423.4h1V423.6h1V423.8h1V423.5h1V423.8h1V423.6h1V423.9h1V423.9h1V424.0h1V423.7h1V424.0h1V423.9h1V424.4h1V424.2h1V424.1h1V424.3h1V424.3h1V424.5h1V424.6h1V424.7h1V426.6h1V426.7h1V432.4h1V433.7h1V432.9h1V423.1h1V423.1h1V424.5h1V424.7h1V424.8h1V424.5h1V424.7h1V424.6h1V424.7h1V424.7h1V424.6h1V424.5h1V424.7h1V424.4h1V424.5h1V424.8h1V424.8h1V424.6h1V424.5h1V424.5h1V424.8h1V426.4h1V426.5h1V432.4h1V433.7h1V432.9h1V422.8h1V422.8h1V424.3h1V424.1h1V424.6h1V424.6h1V424.7h1V424.5h1V424.5h1V425.1h1V425.1h1V424.8h1V424.9h1V425.4h1V425.4h1V425.4h1V425.6h1V425.7h1V425.8h1V426.0h1V426.2h1V426.3h1V426.3h1V426.5h1V426.3h1V426.3h1V426.7h1V426.5h1V426.6h1V426.9h1V427.0h1V427.2h1V428.4h1V428.6h1V432.4h1V433.7h1V422.1h1V422.0h1V423.6h1V423.3h1V423.3h1V423.7h1V423.4h1V423.6h1V423.4h1V423.3h1V423.3h1V423.6h1V423.7h1V423.4h1V423.4h1V425.8h1V425.8h1V432.4h1V433.7h1V423.6h1V423.6h1V423.5h1V425.6h1V425.5h1V432.4h1V433.7h1V422.3h1V445.8V445.8h-1V435.0h-1V436.0h-1V441.6h-1V441.4h-1V443.7h-1V443.3h-1V444.8h-1V435.0h-1V436.1h-1V442.0h-1V442.2h-1V443.8h-1V444.1h-1V443.5h-1V443.4h-1V444.3h-1V444.7h-1V444.8h-1V443.7h-1V444.9h-1V443.7h-1V444.1h-1V443.2h-1V443.8h-1V444.4h-1V444.5h-1V435.1h-1V436.0h-1V439.6h-1V440.0h-1V440.7h-1V441.6h-1V441.6h-1V441.0h-1V441.3h-1V440.7h-1V441.0h-1V442.1h-1V441.7h-1V441.2h-1V442.0h-1V441.8h-1V441.2h-1V441.7h-1V442.5h-1V442.1h-1V442.2h-1V442.7h-1V443.0h-1V443.0h-1V443.1h-1V443.3h-1V442.9h-1V442.8h-1V442.4h-1V442.7h-1V443.8h-1V442.7h-1V443.5h-1V443.8h-1V445.5h-1V444.8h-1V435.8h-1V435.1h-1V436.2h-1V441.6h-1V441.0h-1V442.7h-1V442.7h-1V443.2h-1V442.4h-1V443.4h-1V443.0h-1V443.4h-1V443.7h-1V443.3h-1V442.3h-1V443.7h-1V442.3h-1V443.5h-1V443.9h-1V442.7h-1V443.9h-1V442.5h-1V442.5h-1V443.2h-1V444.5h-1V444.8h-1V435.6h-1V435.0h-1V436.1h-1V440.8h-1V441.9h-1V442.1h-1V442.8h-1V443.8h-1V442.4h-1V443.1h-1V443.3h-1V442.5h-1V443.0h-1V443.2h-1V443.2h-1V444.4h-1V443.2h-1V444.3h-1V443.2h-1V444.3h-1V443.1h-1V443.2h-1V443.5h-1V443.4h-1V444.2h-1V443.6h-1V444.5h-1V446.0h-1V435.1h-1V436.3h-1V442.6h-1V441.9h-1V443.5h-1V443.6h-1V444.5h-1V443.4h-1V444.5h-1V444.4h-1V444.6h-1V443.9h-1V444.1h-1V443.1h-1V444.1h-1V443.3h-1V444.3h-1V444.0h-1V444.1h-1V444.2h-1V442.9h-1V443.1h-1V443.3h-1V443.3h-1V443.6h-1V445.0h-1V444.8h-1V435.0h-1V436.1h-1V439.7h-1V440.4h-1V440.7h-1V440.6h-1V441.5h-1V441.5h-1V441.4h-1V441.2h-1V441.8h-1V441.4h-1V442.5h-1V442.1h-1V441.6h-1V442.2h-1V442.0h-1V442.0h-1V443.1h-1V441.7h-1V442.6h-1V443.3h-1V442.9h-1V443.9h-1V442.6h-1V443.1h-1V445.1h-1V443.8h-1V435.1h-1V436.3h-1V443.9h-1V444.0h-1V444.6h-1V445.8h-1V444.9h-1V444.6h-1V445.4h-1V445.0h-1V444.9h-1V444.1h-1V444.4h-1V444.6h-1V445.6h-1V443.8h-1V445.1h-1V444.2h-1V444.3h-1V444.7h-1V444.0h-1V444.2h-1V444.0h-1V444.7h-1V443.9h-1V445.0h-1V444.4h-1V444.7h-1V444.4h-1V444.8h-1V435.8h-1V435.0h-1V436.1h-1V442.3h-1V441.0h-1V444.1h-1V442.9h-1V435.8h-1V435.0h-1V436.1h-1V441.6h-1V442.0h-1V442.8h-1V443.2h-1V442.6h-1V442.6h-1V442.4h-1V442.7h-1V442.5h-1V442.6h-1V443.3h-1V442.6h-1V443.0h-1V442.6h-1V443.7h-1V444.3h-1V443.9h-1V435.8h-1V435.0h-1V436.2h-1V441.5h-1V441.0h-1V443.6h-1V442.9h-1V442.3h-1V442.9h-1V442.9h-1V442.6h-1V443.8h-1V443.5h-1V442.7h-1V443.0h-1V442.6h-1V442.5h-1V443.4h-1V443.0h-1V442.4h-1V443.6h-1V442.9h-1V442.1h-1V442.4h-1V442.6h-1V443.7h-1V442.7h-1V444.7h-1V444.4h-1V435.0h-1V436.3h-1V441.2h-1V441.6h-1V442.9h-1V444.3h-1V443.2h-1V443.5h-1V442.7h-1V443.3h-1V443.2h-1V443.0h-1V442.8h-1V443.3h-1V443.7h-1V442.4h-1V443.9h-1V442.4h-1V443.7h-1V442.5h-1V443.7h-1V443.4h-1V442.8h-1V443.7h-1V443.0h-1V443.6h-1V442.5h-1V443.0h-1V444.5h-1V444.1h-1V435.0h-1V436.0h-1V441.5h-1V441.6h-1V443.7h-1V442.7h-1V443.9h-1V443.8h-1V443.1h-1V442.7h-1V443.1h-1V444.1h-1V443.7h-1V443.4h-1V442.6h-1V444.3h-1V444.1h-1V444.1h-1V443.6h-1V435.1h-1V436.2h-1V439.6h-1V440.3h-1V441.3h-1V441.9h-1V441.7h-1V441.5h-1V442.4h-1V441.9h-1V441.6h-1V442.1h-1V443.0h-1V442.6h-1V442.2h-1V442.3h-1V442.7h-1V443.5h-1V443.3h-1V443.6h-1V435.0h-1V436.3h-1V441.2h-1V441.8h-1V442.3h-1V442.7h-1V434.8h-1V434.8h-1V434.8h-1V434.8h-1V434.8h-1V434.9h-1V435.0h-1V435.1h-1V435.3h-1V435.5h-1V435.5h-1V435.6h-1V435.7h-1V435.8h-1V436.0h-1V435.9h-1V436.1h-1V436.1h-1V436.3h-1V436.3h-1V436.8h-1V436.9h-1V436.7h-1V437.1h-1V437.1h-1V437.0h-1V437.4h-1V437.5h-1V437.3h-1V437.6h-1V437.7h-1V438.0h-1V438.0h-1V437.9h-1V438.4h-1V438.2h-1V438.6h-1V438.3h-1V438.7h-1V438.8h-1V439.1h-1V438.6h-1V438.8h-1V439.6h-1V438.8h-1V439.8h-1V439.5h-1V439.6h-1V439.8h-1V439.8h-1V439.6h-1V440.2h-1V439.8h-1V439.9h-1V440.3h-1V441.0h-1V440.3h-1V440.3h-1V440.9h-1V440.9h-1V440.6h-1V440.8h-1V441.9h-1V441.7h-1V434.8h-1V434.8h-1V434.8h-1V434.8h-1V438.1h-1V438.7h-1V439.4h-1V438.9h-1V439.5h-1V439.2h-1V439.5h-1V439.7h-1V439.2h-1V440.1h-1V439.2h-1V439.9h-1V439.7h-1V440.1h-1V440.0h-1V440.2h-1V440.4h-1V439.9h-1V441.0h-1V442.2h-1V435.7h-1V435.1h-1V434.8h-1V435.1h-1V436.3h-1V438.4h-1V438.9h-1V439.3h-1V440.1h-1V440.0h-1V440.4h-1V440.6h-1V440.3h-1V439.9h-1V440.5h-1V441.0h-1V440.9h-1V441.0h-1V440.4h-1V440.8h-1V441.1h-1V441.0h-1V442.0h-1V440.7h-1V442.2h-1V442.6h-1V435.8h-1V435.0h-1V436.3h-1V438.4h-1V438.1h-1V439.8h-1V439.0h-1V439.4h-1V439.8h-1V439.3h-1V439.7h-1V439.0h-1V439.8h-1V439.7h-1V439.6h-1V440.0h-1V439.3h-1V439.5h-1V440.3h-1V440.1h-1V440.3h-1V439.6h-1V440.4h-1V440.0h-1V440.9h-1V440.5h-1V440.9h-1V442.2h-1V441.3h-1V435.7h-1V435.1h-1V434.8h-1V435.1h-1V436.2h-1V439.3h-1V439.6h-1V440.7h-1V441.2h-1V442.0h-1V441.0h-1V442.0h-1V441.4h-1V441.7h-1V441.7h-1V441.0h-1V441.7h-1V440.5h-1V441.2h-1V441.6h-1V442.1h-1V443.0h-1V435.7h-1V435.0h-1V436.3h-1V440.5h-1V439.6h-1V441.5h-1V441.1h-1V435.8h-1V435.1h-1V436.3h-1V441.0h-1V440.9h-1V442.8h-1V442.7h-1V443.2h-1V442.6h-1V441.9h-1V442.4h-1V442.9h-1V442.6h-1V442.2h-1V442.3h-1V441.8h-1V441.5h-1V442.4h-1V442.1h-1V441.4h-1V442.0h-1V441.6h-1V441.8h-1V441.6h-1V442.2h-1V441.2h-1V441.9h-1V442.7h-1V443.3h-1V435.8h-1V435.0h-1V436.1h-1V438.1h-1V438.2h-1V439.3h-1V439.2h-1V439.9h-1V439.1h-1V438.8h-1V439.6h-1V439.5h-1V440.1h-1V439.7h-1V440.2h-1V439.7h-1V440.0h-1V440.1h-1V440.5h-1V440.6h-1V440.0h-1V440.2h-1V440.5h-1V441.0h-1V440.5h-1V440.8h-1V441.3h-1V442.3h-1V442.1h-1V435.7h-1V435.0h-1V436.0h-1V441.1h-1V441.5h-1V442.1h-1V442.5h-1V442.6h-1V442.9h-1V442.1h-1V442.2h-1V443.0h-1V442.2h-1V443.1h-1V442.4h-1V442.4h-1V442.2h-1V441.9h-1V442.9h-1V442.0h-1V442.3h-1V442.0h-1V442.3h-1V441.8h-1V441.6h-1V441.5h-1V441.4h-1V441.3h-1V441.6h-1V441.8h-1V441.1h-1V442.8h-1V441.6h-1V441.9h-1V441.4h-1V442.4h-1V443.2h-1V435.7h-1V435.1h-1V434.9h-1V435.1h-1V436.4h-1V439.5h-1V439.6h-1V440.5h-1V441.6h-1V441.3h-1V435.8h-1V435.1h-1V434.9h-1V435.1h-1V436.2h-1V440.3h-1V440.5h-1V441.5h-1V442.2h-1V441.3h-1V442.5h-1V441.0h-1V442.2h-1V441.6h-1V441.4h-1V441.2h-1V441.2h-1V441.0h-1V441.7h-1V441.6h-1V441.5h-1V440.9h-1V440.7h-1V441.2h-1V441.2h-1V441.3h-1V441.0h-1V441.9h-1V441.4h-1V440.6h-1V440.8h-1V441.0h-1V441.0h-1V440.2h-1V440.7h-1V441.2h-1V441.0h-1V441.9h-1V442.4h-1V435.7h-1V435.0h-1V436.1h-1V438.5h-1V438.1h-1V439.4h-1V439.7h-1V439.7h-1V439.9h-1V440.5h-1V439.7h-1V439.8h-1V440.3h-1V439.6h-1V440.1h-1V440.8h-1V440.6h-1V440.3h-1V440.7h-1V441.0h-1V440.3h-1V439.9h-1V440.1h-1V441.3h-1V440.5h-1V440.5h-1V440.6h-1V442.6h-1V442.7h-1V435.2h-1V434.9h-1V435.1h-1V436.2h-1V440.0h-1V440.2h-1V441.9h-1V442.3h-1V441.2h-1V441.6h-1V441.4h-1V442.1h-1V442.4h-1V441.8h-1V441.5h-1V442.0h-1V440.6h-1V441.3h-1V440.6h-1V441.0h-1V441.5h-1V441.5h-1V441.3h-1V441.3h-1V441.5h-1V440.6h-1V441.7h-1V442.6h-1V435.8h-1V435.0h-1V436.1h-1V438.7h-1V438.7h-1V439.7h-1V440.3h-1V440.0h-1V440.3h-1V440.6h-1V440.2h-1V440.0h-1V440.4h-1V440.4h-1V440.8h-1V440.0h-1V440.5h-1V441.2h-1V440.9h-1V440.9h-1V440.6h-1V440.7h-1V440.3h-1V441.2h-1V440.9h-1V441.2h-1V441.0h-1V442.2h-1V442.0h-1V435.1h-1V434.8h-1V435.1h-1V436.3h-1V439.8h-1V439.9h-1V440.6h-1V441.0h-1V441.8h-1V441.0h-1V441.8h-1V441.1h-1V441.4h-1V441.1h-1V441.3h-1V440.4h-1V441.5h-1V441.0h-1V440.5h-1V440.3h-1V439.9h-1V440.9h-1V440.4h-1V441.3h-1V442.3h-1V435.8h-1V435.0h-1V436.2h-1V438.9h-1V438.9h-1V439.6h-1V439.5h-1V439.8h-1V440.6h-1V440.0h-1V440.6h-1V440.2h-1V440.4h-1V440.4h-1V440.8h-1V440.7h-1V440.1h-1V440.5h-1V441.5h-1V442.4h-1V435.8h-1V435.0h-1V436.3h-1V439.8h-1V440.1h-1V441.4h-1V440.7h-1V441.1h-1V435.6h-1V435.1h-1V434.9h-1V435.2h-1V436.3h-1V440.1h-1V439.9h-1V441.4h-1V441.0h-1V441.3h-1V441.2h-1V440.7h-1V441.9h-1V441.6h-1V441.1h-1V440.6h-1V440.5h-1V440.8h-1V441.3h-1V441.0h-1V440.5h-1V441.2h-1V440.6h-1V440.6h-1V441.6h-1V441.0h-1V440.1h-1V440.1h-1V440.6h-1V441.3h-1V441.1h-1V435.8h-1V435.0h-1V436.2h-1V439.5h-1V439.4h-1V440.1h-1V440.4h-1V435.8h-1V435.1h-1V434.8h-1V435.1h-1V436.3h-1V438.9h-1V439.8h-1V440.5h-1V440.9h-1V441.3h-1V435.6h-1V435.0h-1V434.8h-1V435.1h-1V436.4h-1V438.1h-1V437.7h-1V438.5h-1V438.3h-1V438.4h-1V439.5h-1V438.8h-1V438.8h-1V439.1h-1V439.4h-1V439.1h-1V439.1h-1V439.1h-1V439.3h-1V439.3h-1V439.8h-1V440.4h-1V439.9h-1V440.2h-1V440.6h-1V440.4h-1V440.1h-1V440.6h-1V440.4h-1V440.4h-1V440.7h-1V441.6h-1V441.7h-1V435.8h-1V435.0h-1V436.3h-1V439.6h-1V440.1h-1V440.8h-1V440.5h-1V441.3h-1V441.3h-1V441.5h-1V441.3h-1V441.0h-1V440.6h-1V441.6h-1V441.3h-1V440.7h-1V440.5h-1V440.5h-1V440.7h-1V441.5h-1V440.9h-1V440.8h-1V441.1h-1V440.2h-1V441.0h-1V441.9h-1V442.7h-1V435.9h-1V435.1h-1V436.2h-1V439.9h-1V440.0h-1V441.6h-1V441.9h-1V435.6h-1V435.2h-1V434.9h-1V435.0h-1V436.4h-1V439.8h-1V440.6h-1V441.1h-1V441.3h-1V441.7h-1V441.1h-1V442.0h-1V440.5h-1V441.7h-1V440.7h-1V440.8h-1V440.3h-1V441.6h-1V441.3h-1V441.6h-1V440.9h-1V440.2h-1V440.9h-1V440.5h-1V441.3h-1V440.7h-1V440.1h-1V440.0h-1V441.1h-1V440.7h-1V441.3h-1V442.5h-1V442.1h-1V435.1h-1V434.9h-1V435.1h-1V436.3h-1V439.5h-1V440.2h-1V440.8h-1V441.1h-1V435.8h-1V435.0h-1V436.3h-1V438.9h-1V439.5h-1V440.1h-1V440.9h-1V440.9h-1V440.7h-1V440.6h-1V440.9h-1V440.4h-1V440.7h-1V441.2h-1V440.4h-1V440.5h-1V440.4h-1V439.9h-1V439.9h-1V440.0h-1V440.0h-1V440.6h-1V440.1h-1V441.1h-1V440.6h-1V440.0h-1V441.1h-1V442.2h-1V441.3h-1V435.8h-1V435.1h-1V434.8h-1V435.1h-1V436.4h-1V438.0h-1V437.9h-1V439.2h-1V439.3h-1V439.1h-1V439.1h-1V439.6h-1V439.6h-1V439.8h-1V439.5h-1V440.2h-1V440.7h-1V440.7h-1V440.2h-1V439.9h-1V440.9h-1V440.8h-1V440.8h-1V441.1h-1V440.4h-1V441.0h-1V441.5h-1V441.2h-1V442.8h-1V442.8h-1V435.8h-1V435.0h-1V436.3h-1V439.1h-1V439.6h-1V440.2h-1V441.1h-1V440.5h-1V441.3h-1V440.4h-1V440.2h-1V440.8h-1V440.2h-1V440.3h-1V440.9h-1V440.3h-1V440.3h-1V441.3h-1V440.4h-1V440.9h-1V441.0h-1V440.7h-1V440.7h-1V440.2h-1V441.3h-1V441.2h-1V440.0h-1V441.9h-1V441.2h-1V435.1h-1V434.8h-1V435.1h-1V436.4h-1V439.2h-1V440.2h-1V441.5h-1V442.1h-1V440.7h-1V435.1h-1V434.8h-1V435.1h-1V436.2h-1V439.6h-1V439.8h-1V440.9h-1V441.1h-1V440.6h-1V441.3h-1V441.4h-1V441.1h-1V440.6h-1V441.6h-1V441.6h-1V441.2h-1V440.7h-1V440.4h-1V441.2h-1V440.3h-1V441.3h-1V441.0h-1V440.3h-1V442.2h-1V442.5h-1V435.7h-1V435.0h-1V436.1h-1V439.5h-1V438.6h-1V439.9h-1V439.9h-1V440.7h-1V440.2h-1V441.4h-1V440.7h-1V441.1h-1V441.4h-1V441.0h-1V441.6h-1V440.6h-1V441.7h-1V441.8h-1V442.1h-1V443.5h-1V435.7h-1V435.0h-1V436.3h-1V438.5h-1V439.2h-1V440.0h-1V440.8h-1V440.2h-1V435.8h-1V435.1h-1V436.3h-1V438.5h-1V438.5h-1V439.8h-1V439.3h-1V439.5h-1V439.5h-1V440.0h-1V440.5h-1V440.4h-1V440.7h-1V440.0h-1V440.6h-1V440.5h-1V440.5h-1V440.7h-1V440.9h-1V440.0h-1V440.9h-1V441.5h-1V441.6h-1V440.4h-1V441.7h-1V441.0h-1V440.8h-1V442.3h-1V442.8h-1V435.8h-1V435.2h-1V434.9h-1V435.1h-1V436.3h-1V439.8h-1V439.9h-1V440.8h-1V440.7h-1V441.0h-1V440.7h-1V440.1h-1V440.9h-1V441.0h-1V440.3h-1V441.3h-1V440.8h-1V440.5h-1V440.3h-1V440.4h-1V442.3h-1V442.8h-1V435.8h-1V435.0h-1V436.1h-1V438.3h-1V438.5h-1V439.9h-1V439.6h-1V440.2h-1V439.7h-1V440.2h-1V439.5h-1V439.8h-1V439.8h-1V440.2h-1V440.4h-1V439.6h-1V440.0h-1V440.0h-1V440.2h-1V441.3h-1V440.8h-1V441.4h-1V442.9h-1V441.8h-1V435.7h-1V435.1h-1V436.2h-1V439.9h-1V440.0h-1V442.4h-1V441.0h-1V442.1h-1V441.7h-1V442.2h-1V442.1h-1V441.8h-1V441.9h-1V441.4h-1V441.1h-1V441.2h-1V441.0h-1V442.0h-1V441.2h-1V441.1h-1V441.0h-1V442.1h-1V442.2h-1V443.5h-1V435.7h-1V435.0h-1V436.2h-1V439.7h-1V439.3h-1V440.4h-1V440.4h-1V435.7h-1V435.1h-1V436.2h-1V439.7h-1V439.4h-1V440.9h-1V441.2h-1V435.8h-1V435.0h-1V436.1h-1V440.6h-1V440.1h-1V441.7h-1V441.8h-1V441.6h-1V440.9h-1V442.2h-1V442.4h-1V441.2h-1V441.3h-1V441.4h-1V441.6h-1V442.5h-1V441.6h-1V441.7h-1V441.8h-1V442.3h-1V442.4h-1V441.3h-1V441.0h-1V442.5h-1V441.9h-1V443.1h-1V442.9h-1V435.7h-1V435.1h-1V434.8h-1V435.2h-1V436.4h-1V439.3h-1V439.3h-1V440.7h-1V439.8h-1V440.4h-1V440.7h-1V440.2h-1V440.5h-1V440.5h-1V440.1h-1V440.5h-1V440.3h-1V440.4h-1V441.0h-1V440.6h-1V440.1h-1V439.9h-1V440.1h-1V440.6h-1V440.3h-1V440.5h-1V440.9h-1V440.3h-1V440.9h-1V440.4h-1V440.4h-1V441.2h-1V441.6h-1V435.7h-1V435.1h-1V434.8h-1V435.1h-1V436.2h-1V438.1h-1V438.4h-1V439.5h-1V439.2h-1V439.2h-1V439.5h-1V440.2h-1V439.6h-1V440.8h-1V440.1h-1V440.1h-1V439.9h-1V440.4h-1V440.8h-1V439.9h-1V440.3h-1V440.8h-1V441.4h-1V440.5h-1V441.5h-1V441.4h-1V441.0h-1V441.5h-1V441.5h-1V443.3h-1V443.1h-1V435.7h-1V435.0h-1V436.3h-1V437.4h-1V437.4h-1V438.4h-1V438.3h-1V438.3h-1V439.1h-1V439.0h-1V438.6h-1V438.4h-1V438.5h-1V439.3h-1V439.1h-1V439.2h-1V439.0h-1V439.1h-1V439.9h-1V439.6h-1V440.2h-1V440.2h-1V439.6h-1V439.9h-1V440.8h-1V440.3h-1V441.1h-1V440.8h-1V440.9h-1V441.9h-1V441.0h-1V434.8h-1V434.8h-1V434.8h-1V434.8h-1V434.8h-1V434.8h-1V434.8h-1V434.8h-1V434.8h-1V434.8h-1V434.8h-1V434.8h-1V434.8h-1V434.8h-1V434.8h-1V434.8h-1V434.8h-1V434.8h-1V434.8h-1V434.8h-1V434.8h-1V434.8h-1V434.8h-1V434.8h-1V434.8h-1V434.8h-1V434.8h-1V434.8h-1V434.8h-1V434.8h-1V434.8h-1V434.8h-1V434.8h-1V434.8h-1V434.8h-1V434.8h-1V434.8h-1V434.8h-1V434.8h-1V434.8h-1V434.8h-1V434.8h-1V434.8h-1V434.8h-1V434.8h-1V434.8h-1V434.8h-1V434.8h-1V434.8h-1V434.8h-1V434.8h-1V434.8h-1V434.8h-1V434.8h-1V434.8h-1V434.8h-1V434.8h-1V434.8h-1V434.8h-1V434.8h-1V434.8h-1V434.8h-1V434.8h-1V434.8h-1V434.8h-1V434.8h-1V434.8h-1V434.8h-1V434.8h-1V434.8h-1V434.8h-1V434.8h-1V434.8h-1V434.8h-1V434.8h-1V434.8h-1V434.8h-1V434.8h-1V434.8h-1V434.8h-1V434.8h-1V434.8h-1V434.8h-1V434.8h-1V434.8h-1V434.8h-1V434.8h-1V434.8h-1V434.8h-1V434.8h-1V434.8h-1V434.8h-1V434.8h-1V434.8h-1V434.8h-1V434.8h-1V434.8h-1V434.8h-1V434.8h-1V434.8h-1V434.8h-1V434.8h-1V434.8h-1V434.8h-1V434.8h-1V434.8h-1V434.8h-1V434.8h-1V434.8h-1V434.8h-1V434.8h-1V434.8h-1V434.8h-1V434.8h-1V434.8h-1V434.8h-1V434.8h-1V434.8h-1V434.8h-1V434.8h-1V434.8h-1V434.8h-1V434.8h-1V434.8h-1V434.8h-1V434.8h-1V434.8h-1V434.8h-1V434.8h-1V434.8h-1V434.8h-1V434.8h-1V434.8h-1V434.8h-1V434.8h-1V434.8h-1V434.8h-1V434.8h-1V434.8h-1V434.8h-1V434.8h-1V434.8h-1V434.8h-1V434.8h-1V434.8h-1V434.8h-1V434.8h-1V434.8h-1V434.8h-1V434.8h-1V434.8h-1V434.8h-1V434.8h-1V434.8h-1V434.8h-1V434.8h-1V434.8h-1V434.8h-1V434.8h-1V434.8h-1V434.8h-1V434.8h-1V434.8h-1V434.8h-1V434.8h-1V434.8h-1V434.8h-1V434.8h-1V434.8h-1V434.8h-1V434.8h-1V434.8h-1V434.8h-1V434.8h-1V434.8h-1V434.8h-1V434.8h-1V434.8h-1V434.8h-1V434.8h-1V434.8h-1V434.8h-1V434.8h-1V434.8h-1V434.8h-1V434.8h-1V434.8h-1V434.8h-1V434.8h-1V434.8h-1V434.8h-1V434.8h-1V434.8h-1V434.8h-1V434.8h-1V434.8h-1V434.8h-1V434.8h-1V434.8h-1V434.8h-1V434.8h-1V434.8h-1V434.8h-1V434.8h-1V434.8h-1V434.8h-1V434.8h-1V434.8h-1V434.8h-1V434.8h-1V434.8h-1V434.8h-1V434.8h-1V434.8h-1V434.8h-1V434.8h-1V434.8h-1V434.8h-1V434.8h-1V434.8h-1V434.8h-1V434.8h-1V434.8h-1V434.8h-1V434.8h-1V434.8h-1V434.8h-1V434.8h-1V434.8h-1V434.8h-1V434.8h-1V434.8h-1V434.8h-1V434.8h-1V434.8h-1V434.8h-1V434.8h-1V434.8h-1V434.8h-1V434.8h-1V434.8h-1V434.8h-1V434.8h-1V434.8h-1V434.8h-1V434.8h-1V434.8h-1V434.8h-1V434.8h-1V434.8h-1V434.8h-1V434.8h-1V434.8h-1Z"/><path d="M309 482.0V482.0h1V482.0h1V482.0h1V482.0h1V482.0h1V482.0h1V482.0h1V482.0h1V482.0h1V482.0h1V482.0h1V482.0h1V482.0h1V482.0h1V482.0h1V482.0h1V482.0h1V482.0h1V482.0h1V482.0h1V482.0h1V482.0h1V482.0h1V482.0h1V482.0h1V482.0h1V482.0h1V482.0h1V482.0h1V482.0h1V482.0h1V482.0h1V482.0h1V482.0h1V482.0h1V482.0h1V482.0h1V482.0h1V482.0h1V482.0h1V482.0h1V482.0h1V482.0h1V482.0h1V482.0h1V482.0h1V482.0h1V482.0h1V482.0h1V482.0h1V482.0h1V482.0h1V482.0h1V482.0h1V482.0h1V482.0h1V482.0h1V482.0h1V482.0h1V482.0h1V482.0h1V482.0h1V482.0h1V482.0h1V482.0h1V482.0h1V482.0h1V482.0h1V482.0h1V482.0h1V482.0h1V482.0h1V482.0h1V482.0h1V482.0h1V482.0h1V482.0h1V482.0h1V482.0h1V482.0h1V482.0h1V482.0h1V482.0h1V482.0h1V482.0h1V482.0h1V482.0h1V482.0h1V482.0h1V482.0h1V482.0h1V482.0h1V482.0h1V482.0h1V482.0h1V482.0h1V482.0h1V482.0h1V482.0h1V482.0h1V482.0h1V482.0h1V482.0h1V482.0h1V482.0h1V482.0h1V482.0h1V482.0h1V482.0h1V482.0h1V482.0h1V482.0h1V482.0h1V482.0h1V482.0h1V482.0h1V482.0h1V482.0h1V482.0h1V482.0h1V482.0h1V482.0h1V482.0h1V482.0h1V482.0h1V482.0h1V482.0h1V482.0h1V482.0h1V482.0h1V482.0h1V482.0h1V482.0h1V482.0h1V482.0h1V482.0h1V482.0h1V482.0h1V482.0h1V482.0h1V482.0h1V482.0h1V482.0h1V482.0h1V482.0h1V482.0h1V482.0h1V482.0h1V482.0h1V482.0h1V482.0h1V482.0h1V482.0h1V482.0h1V482.0h1V482.0h1V482.0h1V482.0h1V482.0h1V482.0h1V482.0h1V482.0h1V482.0h1V482.0h1V482.0h1V482.0h1V482.0h1V482.0h1V482.0h1V482.0h1V482.0h1V482.0h1V482.0h1V482.0h1V482.0h1V482.0h1V482.0h1V482.0h1V482.0h1V482.0h1V482.0h1V482.0h1V482.0h1V482.0h1V482.0h1V482.0h1V482.0h1V482.0h1V482.0h1V482.0h1V482.0h1V482.0h1V482.0h1V482.0h1V482.0h1V482.0h1V482.0h1V482.0h1V482.0h1V482.0h1V482.0h1V482.0h1V482.0h1V482.0h1V482.0h1V482.0h1V482.0h1V482.0h1V482.0h1V482.0h1V482.0h1V482.0h1V482.0h1V482.0h1V482.0h1V482.0h1V482.0h1V482.0h1V482.0h1V482.0h1V482.0h1V482.0h1V482.0h1V482.0h1V482.0h1V482.0h1V482.0h1V482.0h1V482.0h1V482.0h1V482.0h1V482.0h1V482.0h1V482.0h1V482.0h1V482.0h1V482.0h1V482.0h1V482.0h1V482.0h1V482.0h1V482.0h1V482.0h1V482.0h1V482.0h1V482.0h1V482.0h1V482.0h1V482.0h1V482.0h1V482.0h1V482.0h1V482.0h1V482.0h1V482.0h1V482.0h1V482.0h1V482.0h1V482.0h1V482.0h1V482.0h1V482.0h1V482.0h1V482.0h1V482.0h1V482.0h1V482.0h1V482.0h1V482.0h1V482.0h1V482.0h1V482.0h1V482.0h1V482.0h1V482.0h1V482.0h1V482.0h1V482.0h1V482.0h1V482.0h1V482.0h1V482.0h1V482.0h1V482.0h1V482.0h1V482.0h1V482.0h1V482.0h1V482.0h1V482.0h1V482.0h1V482.0h1V482.0h1V482.0h1V482.0h1V482.0h1V482.0h1V482.0h1V482.0h1V482.0h1V482.0h1V482.0h1V482.0h1V482.0h1V482.0h1V482.0h1V482.0h1V482.0h1V482.0h1V482.0h1V482.0h1V482.0h1V482.0h1V482.0h1V482.0h1V482.0h1V482.0h1V482.0h1V482.0h1V482.0h1V482.0h1V482.0h1V482.0h1V482.0h1V482.0h1V482.0h1V482.0h1V482.0h1V482.0h1V482.0h1V482.0h1V482.0h1V482.0h1V482.0h1V482.0h1V482.0h1V482.0h1V482.0h1V482.0h1V482.0h1V482.0h1V482.0h1V482.0h1V482.0h1V482.0h1V482.0h1V482.0h1V482.0h1V482.0h1V482.0h1V482.0h1V482.0h1V482.0h1V482.0h1V482.0h1V482.0h1V482.0h1V482.0h1V482.0h1V482.0h1V482.0h1V482.0h1V482.0h1V482.0h1V482.0h1V482.0h1V482.0h1V482.0h1V482.0h1V482.0h1V482.0h1V482.0h1V482.0h1V482.0h1V482.0h1V482.0h1V482.0h1V482.0h1V482.0h1V482.0h1V482.0h1V482.0h1V482.0h1V482.0h1V482.0h1V482.0h1V482.0h1V482.0h1V482.0h1V482.0h1V482.0h1V482.0h1V482.0h1V482.0h1V482.0h1V482.0h1V482.0h1V482.0h1V482.0h1V482.0h1V482.0h1V482.0h1V482.0h1V482.0h1V482.0h1V482.0h1V482.0h1V482.0h1V482.0h1V482.0h1V482.0h1V482.0h1V482.0h1V482.0h1V482.0h1V482.0h1V482.0h1V482.0h1V482.0h1V482.0h1V482.0h1V482.0h1V482.0h1V482.0h1V482.0h1V482.0h1V482.0h1V482.0h1V482.0h1V482.0h1V482.0h1V482.0h1V482.0h1V482.0h1V482.0h1V482.0h1V482.0h1V482.0h1V482.0h1V482.0h1V482.0h1V482.0h1V482.0h1V482.0h1V482.0h1V482.0h1V482.0h1V482.0h1V482.0h1V482.0h1V482.0h1V482.0h1V482.0h1V482.0h1V482.0h1V482.0h1V482.0h1V482.0h1V482.0h1V482.0h1V482.0h1V482.0h1V482.0h1V482.0h1V482.0h1V482.0h1V482.0h1V482.0h1V482.0h1V482.0h1V482.0h1V482.0h1V482.0h1V482.0h1V482.0h1V482.0h1V482.0h1V482.0h1V482.0h1V482.0h1V482.0h1V482.0h1V482.0h1V482.0h1V482.0h1V482.0h1V482.0h1V482.0h1V482.0h1V482.0h1V482.0h1V482.0h1V482.0h1V482.0h1V482.0h1V482.0h1V482.0h1V482.0h1V482.0h1V482.0h1V482.0h1V482.0h1V482.0h1V482.0h1V482.0h1V482.0h1V482.0h1V482.0h1V482.0h1V482.0h1V482.0h1V482.0h1V482.0h1V482.0h1V482.0h1V482.0h1V482.0h1V482.0h1V482.0h1V482.0h1V482.0h1V482.0h1V482.0h1V482.0h1V482.0h1V482.0h1V482.0h1V482.0h1V482.0h1V482.0h1V482.0h1V482.0h1V482.0h1V482.0h1V482.0h1V482.0h1V482.0h1V482.0h1V482.0h1V482.0h1V482.0h1V482.0h1V482.0h1V482.0h1V482.0h1V482.0h1V482.0h1V482.0h1V482.0h1V482.0h1V482.0h1V482.0h1V482.0h1V482.0h1V482.0h1V482.0h1V482.0h1V482.0h1V482.0h1V482.0h1V482.0h1V482.0h1V482.0h1V482.0h1V482.0h1V482.0h1V482.0h1V482.0h1V482.0h1V482.0h1V482.0h1V482.0h1V482.0h1V482.0h1V482.0h1V482.0h1V482.0h1V482.0h1V482.0h1V482.0h1V482.0h1V482.0h1V482.0h1V482.0h1V482.0h1V482.0h1V482.0h1V482.0h1V482.0h1V482.0h1V482.0h1V482.0h1V482.0h1V482.0h1V482.0h1V482.0h1V482.0h1V482.0h1V482.0h1V482.0h1V482.0h1V482.0h1V482.0h1V482.0h1V482.0h1V482.0h1V482.0h1V482.0h1V482.0h1V482.0h1V482.0h1V482.0h1V482.0h1V482.0h1V482.0h1V482.0h1V482.0h1V482.0h1V482.0h1V482.0h1V482.0h1V482.0h1V482.0h1V482.0h1V482.0h1V482.0h1V482.0h1V482.0h1V482.0h1V482.0h1V482.0h1V482.0h1V482.0h1V482.0h1V482.0h1V482.0h1V482.0h1V482.0h1V482.0h1V482.0h1V482.0h1V482.0h1V482.0h1V482.0h1V482.0h1V482.0h1V482.0h1V482.0h1V482.0h1V482.0h1V482.0h1V482.0h1V482.0h1V482.0h1V482.0h1V482.0h1V482.0h1V482.0h1V482.0h1V482.0h1V482.0h1V482.0h1V482.0h1V482.0h1V482.0h1V482.0h1V482.0h1V482.0h1V482.0h1V482.0h1V482.0h1V482.0h1V482.0h1V482.0h1V482.0h1V482.0h1V482.0h1V482.0h1V482.0h1V482.0h1V482.0h1V482.0h1V482.0h1V482.0h1V482.0h1V482.0h1V482.0h1V482.0h1V482.0h1V482.0h1V482.0h1V482.0h1V482.0h1V482.0h1V482.0h1V482.0h1V482.0h1V482.0h1V482.0h1V482.0h1V482.0h1V482.0h1V482.0h1V482.0h1V482.0h1V482.0h1V482.0h1V482.0h1V482.0h1V482.0h1V482.0h1V482.0h1V482.0h1V482.0h1V482.0h1V482.0h1V482.0h1V482.0h1V482.0h1V482.0h1V482.0h1V482.0h1V482.0h1V482.0h1V482.0h1V482.0h1V482.0h1V482.0h1V482.0h1V482.0h1V482.0h1V482.0h1V482.0h1V482.0h1V482.0h1V482.0h1V482.0h1V482.0h1V482.0h1V482.0h1V482.0h1V482.0h1V482.0h1V482.0h1V482.0h1V482.0h1V482.0h1V482.0h1V482.0h1V482.0h1V482.0h1V482.0h1V482.0h1V482.0h1V482.0h1V482.0h1V482.0h1V482.0h1V482.0h1V482.0h1V482.0h1V482.0h1V482.0h1V482.0h1V482.0h1V482.0h1V474.9h1V474.9h1V474.9h1V478.4h1V478.6h1V478.0h1V477.8h1V477.2h1V477.4h1V477.4h1V476.7h1V478.3h1V477.3h1V476.9h1V477.0h1V477.6h1V478.1h1V477.6h1V477.8h1V477.9h1V477.9h1V478.9h1V478.0h1V477.4h1V478.2h1V478.1h1V475.8h1V478.5h1V478.9h1V478.9h1V477.6h1V478.2h1V477.6h1V477.8h1V477.7h1V477.4h1V478.3h1V478.0h1V477.3h1V477.8h1V475.5h1V478.3h1V477.3h1V477.5h1V478.1h1V479.0h1V478.9h1V478.8h1V478.4h1V478.2h1V479.4h1V478.3h1V478.2h1V477.9h1V478.4h1V479.8h1V478.6h1V478.5h1V479.3h1V478.3h1V478.6h1V478.3h1V479.2h1V478.6h1V477.9h1V478.9h1V478.0h1V477.7h1V478.4h1V478.4h1V477.9h1V478.4h1V478.0h1V478.2h1V477.2h1V477.3h1V478.0h1V476.9h1V476.0h1V477.8h1V477.0h1V477.0h1V477.2h1V477.7h1V477.8h1V477.9h1V477.8h1V477.1h1V477.5h1V476.4h1V477.0h1V477.4h1V477.5h1V476.3h1V476.7h1V476.5h1V475.8h1V476.4h1V475.9h1V475.3h1V476.2h1V476.2h1V475.8h1V475.0h1V475.7h1V476.2h1V475.4h1V475.8h1V476.5h1V475.2h1V475.3h1V475.5h1V476.2h1V475.6h1V476.9h1V476.8h1V476.5h1V475.8h1V476.3h1V477.3h1V476.6h1V476.7h1V476.8h1V476.8h1V475.9h1V476.6h1V477.0h1V476.6h1V475.7h1V477.0h1V477.0h1V475.9h1V476.8h1V476.4h1V474.7h1V477.1h1V476.0h1V475.6h1V476.7h1V476.3h1V475.3h1V475.0h1V476.2h1V477.1h1V477.2h1V477.4h1V477.0h1V477.2h1V476.8h1V477.2h1V477.5h1V476.7h1V476.8h1V477.2h1V474.7h1V476.9h1V476.3h1V477.0h1V476.2h1V476.0h1V475.8h1V475.6h1V476.2h1V476.8h1V476.6h1V475.9h1V475.9h1V475.1h1V475.1h1V476.3h1V475.9h1V476.3h1V475.2h1V475.3h1V475.2h1V476.1h1V475.5h1V476.3h1V476.1h1V476.1h1V475.8h1V475.6h1V475.6h1V476.8h1V476.1h1V475.5h1V476.5h1V475.8h1V476.6h1V473.8h1V476.4h1V476.6h1V473.8h1V475.5h1V476.9h1V476.4h1V476.7h1V476.7h1V476.5h1V476.2h1V476.2h1V475.9h1V475.7h1V476.4h1V476.9h1V476.1h1V477.6h1V474.8h1V476.9h1V477.3h1V477.8h1V477.4h1V477.6h1V477.1h1V476.1h1V478.5h1V478.8h1V478.8h1V479.0h1V477.7h1V478.8h1V478.4h1V478.6h1V477.5h1V477.4h1V478.7h1V477.4h1V477.5h1V477.6h1V478.7h1V478.6h1V477.6h1V477.6h1V475.9h1V477.2h1V477.4h1V477.5h1V476.4h1V478.1h1V477.5h1V478.3h1V477.5h1V479.0h1V477.9h1V479.2h1V478.5h1V477.9h1V479.2h1V477.2h1V478.9h1V477.9h1V478.8h1V477.9h1V478.7h1V475.6h1V478.0h1V476.9h1V476.9h1V475.6h1V477.2h1V477.4h1V477.3h1V477.9h1V477.4h1V477.7h1V477.0h1V476.6h1V477.3h1V476.3h1V477.8h1V478.2h1V478.5h1V477.8h1V477.6h1V477.6h1V477.7h1V478.1h1V477.9h1V478.7h1V478.0h1V479.2h1V479.3h1V478.2h1V478.2h1V478.5h1V478.4h1V478.5h1V478.2h1V479.2h1V478.7h1V478.4h1V478.7h1V478.7h1V477.5h1V478.0h1V478.5h1V478.7h1V479.3h1V477.8h1V478.6h1V479.4h1V478.1h1V479.2h1V478.3h1V479.1h1V478.5h1V478.4h1V478.9h1V478.8h1V479.7h1V478.8h1V478.6h1V479.2h1V478.3h1V479.7h1V479.1h1V478.1h1V479.3h1V478.8h1V478.7h1V477.8h1V477.8h1V477.2h1V478.1h1V478.4h1V477.3h1V476.1h1V478.0h1V477.8h1V476.9h1V477.1h1V476.9h1V476.5h1V477.4h1V476.3h1V477.5h1V477.5h1V477.2h1V477.2h1V477.2h1V476.3h1V476.3h1V476.2h1V476.7h1V477.3h1V476.3h1V476.5h1V476.8h1V477.3h1V476.3h1V477.4h1V476.6h1V476.8h1V475.8h1V476.5h1V476.5h1V476.4h1V475.6h1V475.4h1V475.1h1V476.6h1V476.0h1V475.9h1V476.5h1V475.7h1V477.0h1V476.8h1V477.1h1V476.8h1V477.0h1V477.3h1V476.1h1V476.7h1V477.4h1V474.7h1V477.0h1V477.8h1V476.5h1V477.8h1V477.0h1V477.7h1V477.8h1V477.5h1V477.1h1V476.6h1V475.3h1V474.6h1V477.0h1V476.5h1V477.2h1V475.9h1V477.1h1V475.9h1V477.0h1V476.7h1V476.9h1V477.0h1V476.3h1V476.6h1V477.1h1V475.7h1V475.8h1V476.4h1V476.4h1V477.0h1V475.9h1V476.7h1V477.2h1V476.0h1V475.8h1V477.0h1V475.9h1V476.4h1V475.5h1V475.4h1V476.2h1V475.3h1V475.9h1V475.7h1V475.0h1V475.5h1V474.6h1V475.5h1V475.6h1V475.9h1V475.0h1V475.0h1V475.0h1V474.5h1V475.9h1V475.1h1V475.1h1V474.7h1V476.1h1V476.3h1V475.4h1V475.9h1V475.7h1V476.2h1V475.5h1V476.0h1V476.0h1V475.9h1V475.8h1V476.6h1V476.0h1V474.2h1V475.9h1V476.6h1V477.2h1V476.2h1V476.8h1V474.7h1V477.2h1V476.5h1V477.1h1V477.5h1V476.2h1V477.0h1V476.8h1V476.3h1V476.8h1V478.1h1V477.7h1V477.7h1V477.1h1V478.3h1V478.8h1V478.8h1V478.5h1V478.1h1V478.6h1V478.0h1V478.4h1V477.1h1V478.4h1V478.8h1V477.6h1V477.6h1V478.6h1V477.6h1V477.0h1V478.1h1V477.6h1V477.1h1V476.9h1V477.8h1V476.7h1V476.9h1V477.3h1V476.5h1V478.0h1V476.5h1V476.6h1V478.3h1V477.9h1V477.8h1V476.9h1V477.0h1V475.6h1V477.9h1V478.2h1V477.7h1V477.5h1V478.6h1V478.6h1V478.1h1V478.5h1V477.3h1V477.3h1V477.0h1V478.0h1V476.8h1V477.3h1V477.6h1V476.9h1V475.2h1V477.3h1V478.0h1V477.5h1V477.6h1V476.0h1V478.2h1V478.2h1V477.2h1V477.2h1V478.8h1V477.9h1V479.0h1V478.8h1V477.7h1V479.3h1V479.4h1V479.0h1V479.3h1V479.1h1V479.3h1V479.5h1V479.7h1V479.0h1V478.5h1V478.8h1V479.4h1V478.9h1V479.1h1V478.7h1V479.1h1V479.0h1V478.2h1V478.7h1V479.2h1V478.3h1V478.3h1V478.8h1V478.8h1V478.0h1V478.9h1V479.4h1V478.7h1V478.5h1V476.9h1V477.9h1V477.3h1V478.8h1V479.3h1V479.0h1V479.0h1V478.7h1V476.6h1V479.1h1V477.9h1V479.2h1V478.2h1V478.9h1V478.3h1V478.1h1V476.9h1V476.9h1V477.1h1V478.1h1V476.9h1V477.4h1V476.2h1V477.7h1V477.0h1V475.9h1V474.5h1V476.8h1V476.3h1V476.2h1V475.7h1V477.4h1V476.2h1V477.3h1V477.5h1V477.8h1V477.1h1V476.5h1V476.2h1V476.4h1V477.8h1V477.6h1V477.4h1V477.8h1V477.7h1V477.0h1V476.9h1V477.2h1V476.5h1V476.2h1V476.2h1V476.6h1V476.6h1V477.3h1V475.7h1V476.2h1V476.4h1V476.3h1V476.5h1V476.6h1V477.2h1V476.2h1V476.2h1V477.4h1V477.8h1V477.1h1V476.6h1V477.1h1V476.9h1V478.3h1V477.0h1V478.2h1V477.3h1V478.3h1V478.3h1V477.6h1V478.2h1V477.7h1V477.3h1V475.8h1V476.4h1V475.2h1V477.1h1V476.6h1V475.9h1V477.0h1V476.1h1V476.4h1V475.8h1V475.8h1V475.1h1V475.3h1V475.2h1V475.4h1V476.1h1V475.2h1V475.3h1V475.2h1V475.8h1V476.4h1V476.6h1V476.5h1V476.3h1V475.7h1V475.3h1V476.4h1V476.4h1V476.4h1V476.0h1V475.4h1V476.1h1V473.9h1V476.1h1V475.2h1V474.8h1V475.1h1V475.4h1V475.3h1V475.0h1V474.3h1V475.0h1V474.9h1V474.4h1V475.7h1V475.4h1V475.0h1V475.2h1V475.8h1V475.4h1V475.1h1V476.5h1V476.3h1V476.5h1V477.3h1V476.6h1V477.4h1V477.6h1V477.0h1V477.0h1V477.2h1V477.9h1V476.3h1V477.4h1V476.7h1V475.0h1V477.7h1V477.3h1V477.2h1V477.1h1V476.2h1V476.8h1V475.7h1V476.3h1V476.9h1V476.7h1V476.9h1V476.5h1V477.7h1V477.8h1V477.5h1V478.2h1V477.1h1V477.8h1V477.4h1V478.5h1V478.1h1V478.0h1V478.0h1V478.5h1V478.7h1V477.3h1V477.3h1V477.8h1V478.4h1V476.9h1V477.5h1V476.8h1V477.2h1V476.6h1V477.6h1V477.0h1V477.0h1V477.5h1V476.8h1V476.3h1V476.1h1V477.5h1V476.9h1V476.4h1V477.5h1V476.2h1V477.1h1V477.2h1V476.7h1V477.7h1V478.2h1V478.2h1V477.7h1V478.1h1V476.6h1V478.5h1V478.0h1V478.1h1V478.7h1V477.8h1V477.8h1V478.2h1V477.6h1V478.6h1V478.3h1V477.1h1V477.2h1V477.4h1V477.9h1V477.7h1V478.4h1V477.8h1V475.8h1V478.9h1V478.6h1V477.6h1V477.9h1V478.4h1V479.4h1V478.5h1V478.8h1V479.5h1V479.8h1V479.6h1V479.2h1V478.6h1V479.8h1V478.9h1V479.6h1V478.7h1V479.8h1V479.8h1V477.5h1V479.4h1V479.1h1V479.3h1V479.5h1V479.0h1V479.4h1V478.8h1V479.1h1V477.9h1V478.9h1V476.6h1V477.8h1V478.6h1V478.0h1V478.5h1V477.9h1V478.9h1V477.1h1V487.4V487.4h-1V485.5h-1V486.8h-1V486.4h-1V486.2h-1V486.1h-1V486.4h-1V487.5h-1V485.8h-1V486.7h-1V485.2h-1V485.6h-1V485.4h-1V485.6h-1V485.3h-1V485.3h-1V485.4h-1V485.1h-1V487.5h-1V484.9h-1V484.8h-1V485.6h-1V484.8h-1V485.6h-1V484.8h-1V486.3h-1V485.2h-1V485.2h-1V484.9h-1V485.1h-1V485.9h-1V485.7h-1V485.3h-1V486.5h-1V487.1h-1V486.8h-1V486.1h-1V486.0h-1V488.1h-1V487.2h-1V486.3h-1V487.0h-1V486.7h-1V487.2h-1V487.6h-1V487.0h-1V486.2h-1V486.2h-1V487.2h-1V486.3h-1V487.0h-1V486.5h-1V485.8h-1V486.5h-1V486.3h-1V486.2h-1V487.8h-1V486.1h-1V486.6h-1V486.5h-1V486.3h-1V487.0h-1V488.2h-1V487.1h-1V487.1h-1V488.3h-1V486.9h-1V488.5h-1V487.9h-1V486.8h-1V488.6h-1V488.3h-1V488.0h-1V487.5h-1V487.0h-1V487.8h-1V486.9h-1V487.7h-1V487.2h-1V487.6h-1V486.9h-1V487.9h-1V486.4h-1V486.6h-1V487.8h-1V487.2h-1V486.2h-1V486.3h-1V486.7h-1V486.6h-1V486.8h-1V485.8h-1V486.9h-1V487.2h-1V487.6h-1V486.4h-1V487.4h-1V486.6h-1V487.1h-1V487.8h-1V487.9h-1V487.9h-1V487.7h-1V488.1h-1V489.1h-1V487.3h-1V488.7h-1V487.9h-1V487.4h-1V487.7h-1V486.8h-1V489.4h-1V487.7h-1V487.2h-1V488.2h-1V486.4h-1V487.5h-1V487.9h-1V487.9h-1V486.6h-1V487.1h-1V488.2h-1V487.4h-1V488.3h-1V488.8h-1V488.1h-1V489.9h-1V488.4h-1V489.2h-1V489.3h-1V488.8h-1V489.1h-1V488.6h-1V489.8h-1V489.4h-1V489.8h-1V490.8h-1V490.0h-1V489.0h-1V489.2h-1V489.2h-1V490.0h-1V489.0h-1V488.6h-1V490.9h-1V488.4h-1V489.0h-1V488.5h-1V488.4h-1V488.1h-1V488.1h-1V489.5h-1V489.2h-1V487.7h-1V488.0h-1V488.1h-1V488.3h-1V489.0h-1V489.1h-1V488.5h-1V489.8h-1V488.1h-1V489.7h-1V488.6h-1V488.9h-1V489.4h-1V488.1h-1V488.6h-1V488.1h-1V488.9h-1V488.0h-1V489.0h-1V488.1h-1V487.6h-1V489.8h-1V488.5h-1V488.6h-1V487.1h-1V487.2h-1V486.4h-1V487.4h-1V486.5h-1V486.1h-1V487.2h-1V486.4h-1V488.0h-1V486.1h-1V487.5h-1V487.9h-1V488.3h-1V487.3h-1V486.6h-1V487.3h-1V488.9h-1V488.5h-1V486.9h-1V487.7h-1V488.4h-1V488.5h-1V487.5h-1V488.4h-1V488.3h-1V487.5h-1V488.2h-1V488.4h-1V487.9h-1V487.9h-1V488.5h-1V487.7h-1V487.7h-1V487.1h-1V487.0h-1V486.7h-1V487.6h-1V487.4h-1V487.0h-1V488.0h-1V488.2h-1V487.6h-1V487.2h-1V486.5h-1V486.6h-1V486.9h-1V488.8h-1V487.3h-1V488.5h-1V488.3h-1V487.9h-1V487.4h-1V489.3h-1V489.2h-1V488.0h-1V486.8h-1V488.3h-1V487.0h-1V487.4h-1V486.8h-1V487.2h-1V487.1h-1V487.7h-1V486.7h-1V486.1h-1V485.7h-1V486.4h-1V485.4h-1V486.6h-1V485.8h-1V487.3h-1V486.0h-1V485.4h-1V485.9h-1V485.2h-1V486.1h-1V487.5h-1V486.7h-1V487.8h-1V485.8h-1V486.0h-1V485.4h-1V485.7h-1V486.7h-1V485.9h-1V485.6h-1V486.2h-1V486.0h-1V485.5h-1V485.8h-1V486.2h-1V485.4h-1V485.5h-1V486.0h-1V485.8h-1V485.4h-1V485.3h-1V485.8h-1V485.7h-1V485.6h-1V485.0h-1V485.2h-1V485.6h-1V485.3h-1V485.5h-1V485.6h-1V485.1h-1V485.2h-1V487.2h-1V485.8h-1V485.6h-1V486.6h-1V486.1h-1V487.5h-1V487.2h-1V486.5h-1V486.4h-1V488.3h-1V487.2h-1V487.1h-1V486.6h-1V486.8h-1V489.6h-1V487.7h-1V486.8h-1V487.5h-1V488.2h-1V486.8h-1V488.0h-1V487.1h-1V487.6h-1V485.8h-1V486.8h-1V486.1h-1V486.4h-1V487.2h-1V487.2h-1V486.4h-1V486.7h-1V489.1h-1V487.1h-1V488.1h-1V487.2h-1V486.3h-1V485.9h-1V487.9h-1V487.7h-1V486.6h-1V488.0h-1V486.8h-1V487.3h-1V487.3h-1V487.0h-1V487.5h-1V487.7h-1V487.2h-1V486.6h-1V487.1h-1V486.8h-1V486.0h-1V487.0h-1V486.9h-1V485.6h-1V486.2h-1V487.8h-1V485.9h-1V486.9h-1V486.2h-1V486.3h-1V486.3h-1V486.1h-1V485.7h-1V486.5h-1V487.6h-1V486.4h-1V486.6h-1V486.7h-1V487.5h-1V488.7h-1V488.0h-1V487.4h-1V488.2h-1V487.1h-1V487.4h-1V488.3h-1V487.5h-1V489.9h-1V488.1h-1V488.0h-1V487.1h-1V488.0h-1V488.1h-1V490.1h-1V488.8h-1V487.4h-1V488.3h-1V488.6h-1V488.8h-1V488.6h-1V489.6h-1V488.5h-1V489.4h-1V489.1h-1V488.5h-1V488.6h-1V487.9h-1V489.5h-1V489.8h-1V490.0h-1V488.7h-1V490.1h-1V490.0h-1V489.6h-1V489.9h-1V488.5h-1V489.1h-1V488.5h-1V489.8h-1V488.3h-1V490.1h-1V489.0h-1V488.4h-1V489.2h-1V488.7h-1V489.0h-1V489.1h-1V488.2h-1V488.2h-1V487.3h-1V488.3h-1V489.1h-1V487.8h-1V487.8h-1V488.9h-1V488.0h-1V487.6h-1V487.8h-1V488.2h-1V488.8h-1V487.6h-1V487.7h-1V487.8h-1V487.2h-1V487.6h-1V487.4h-1V487.9h-1V489.2h-1V487.8h-1V488.8h-1V486.9h-1V488.4h-1V487.3h-1V489.4h-1V488.5h-1V488.4h-1V487.3h-1V487.3h-1V486.5h-1V486.5h-1V488.1h-1V486.7h-1V487.7h-1V486.4h-1V487.9h-1V489.2h-1V487.1h-1V488.1h-1V487.9h-1V487.3h-1V487.4h-1V488.2h-1V487.9h-1V487.7h-1V487.5h-1V488.1h-1V487.7h-1V488.1h-1V488.9h-1V487.9h-1V489.4h-1V489.5h-1V489.3h-1V488.5h-1V487.8h-1V488.5h-1V488.5h-1V487.7h-1V487.8h-1V486.7h-1V488.1h-1V487.3h-1V487.8h-1V488.2h-1V487.7h-1V487.6h-1V488.0h-1V488.0h-1V487.9h-1V488.3h-1V486.9h-1V487.3h-1V487.0h-1V487.0h-1V487.5h-1V487.8h-1V486.7h-1V487.9h-1V487.2h-1V487.5h-1V487.8h-1V486.9h-1V487.0h-1V488.7h-1V487.2h-1V486.5h-1V486.2h-1V487.4h-1V486.8h-1V487.2h-1V486.2h-1V485.7h-1V485.6h-1V486.9h-1V485.6h-1V484.9h-1V486.1h-1V485.6h-1V485.7h-1V486.1h-1V484.8h-1V485.9h-1V485.5h-1V486.1h-1V486.3h-1V485.8h-1V486.6h-1V485.5h-1V486.8h-1V485.2h-1V486.3h-1V486.5h-1V485.2h-1V485.6h-1V485.8h-1V486.5h-1V487.0h-1V485.9h-1V486.1h-1V486.6h-1V486.2h-1V485.3h-1V486.8h-1V486.2h-1V486.0h-1V486.2h-1V486.5h-1V486.4h-1V485.1h-1V485.2h-1V486.8h-1V486.0h-1V487.0h-1V486.1h-1V487.2h-1V486.9h-1V487.4h-1V487.1h-1V486.2h-1V486.7h-1V487.2h-1V487.7h-1V487.6h-1V487.3h-1V487.7h-1V486.7h-1V486.8h-1V486.4h-1V486.7h-1V487.2h-1V487.1h-1V489.1h-1V487.5h-1V487.8h-1V486.8h-1V489.2h-1V485.9h-1V486.6h-1V486.1h-1V486.6h-1V485.4h-1V487.5h-1V485.4h-1V486.7h-1V486.1h-1V485.3h-1V486.7h-1V485.8h-1V487.5h-1V486.2h-1V487.1h-1V486.2h-1V488.5h-1V487.5h-1V487.2h-1V486.9h-1V488.2h-1V486.5h-1V487.5h-1V485.9h-1V485.9h-1V486.6h-1V487.0h-1V487.3h-1V485.6h-1V486.7h-1V487.1h-1V486.0h-1V486.1h-1V485.5h-1V487.1h-1V485.4h-1V485.5h-1V485.7h-1V485.7h-1V488.6h-1V487.3h-1V487.4h-1V487.2h-1V487.2h-1V487.4h-1V487.5h-1V489.2h-1V486.6h-1V488.0h-1V487.4h-1V488.6h-1V489.3h-1V488.1h-1V488.7h-1V488.3h-1V487.5h-1V488.2h-1V488.0h-1V488.0h-1V487.2h-1V489.0h-1V490.8h-1V487.4h-1V488.4h-1V489.9h-1V488.4h-1V488.8h-1V488.3h-1V488.9h-1V488.1h-1V487.9h-1V489.1h-1V489.1h-1V488.1h-1V488.0h-1V488.5h-1V488.3h-1V489.6h-1V487.9h-1V489.6h-1V489.3h-1V489.6h-1V488.4h-1V489.0h-1V488.1h-1V489.5h-1V488.8h-1V488.3h-1V488.8h-1V488.0h-1V488.3h-1V487.9h-1V488.7h-1V489.0h-1V488.8h-1V488.3h-1V487.2h-1V488.6h-1V487.6h-1V490.3h-1V487.6h-1V487.6h-1V487.5h-1V486.9h-1V487.2h-1V487.6h-1V487.4h-1V487.1h-1V487.2h-1V487.6h-1V487.5h-1V488.5h-1V490.1h-1V489.3h-1V488.2h-1V487.7h-1V489.3h-1V488.9h-1V487.0h-1V490.0h-1V488.2h-1V487.2h-1V488.2h-1V487.7h-1V487.8h-1V489.1h-1V487.7h-1V487.5h-1V487.4h-1V488.8h-1V487.3h-1V487.9h-1V488.1h-1V487.6h-1V487.1h-1V487.8h-1V489.0h-1V488.0h-1V488.0h-1V487.2h-1V488.3h-1V488.1h-1V489.3h-1V489.2h-1V489.6h-1V487.5h-1V489.0h-1V488.9h-1V487.8h-1V488.3h-1V490.1h-1V488.4h-1V488.7h-1V488.8h-1V488.7h-1V488.2h-1V487.6h-1V488.8h-1V487.5h-1V487.5h-1V487.8h-1V487.2h-1V487.5h-1V487.8h-1V488.6h-1V486.7h-1V487.5h-1V486.5h-1V487.1h-1V486.7h-1V486.7h-1V486.9h-1V487.6h-1V487.7h-1V487.2h-1V488.0h-1V487.8h-1V486.4h-1V487.1h-1V487.7h-1V486.6h-1V486.9h-1V485.9h-1V486.5h-1V486.4h-1V486.0h-1V486.8h-1V486.7h-1V485.5h-1V486.6h-1V485.8h-1V485.4h-1V486.1h-1V485.6h-1V486.2h-1V485.1h-1V486.3h-1V486.3h-1V485.1h-1V486.3h-1V486.7h-1V486.3h-1V486.2h-1V485.4h-1V486.1h-1V486.0h-1V486.0h-1V485.9h-1V485.6h-1V486.9h-1V487.2h-1V487.0h-1V486.6h-1V489.2h-1V486.7h-1V487.5h-1V487.0h-1V486.2h-1V487.2h-1V486.7h-1V486.7h-1V486.7h-1V486.1h-1V487.2h-1V485.9h-1V485.8h-1V486.4h-1V488.9h-1V486.5h-1V486.3h-1V487.3h-1V486.6h-1V485.7h-1V486.4h-1V486.9h-1V487.1h-1V486.9h-1V486.1h-1V486.7h-1V487.6h-1V487.4h-1V487.3h-1V486.5h-1V487.8h-1V487.2h-1V487.2h-1V487.6h-1V487.1h-1V486.2h-1V486.1h-1V486.4h-1V489.7h-1V490.1h-1V489.1h-1V482.8h-1V482.8h-1V482.8h-1V482.8h-1V482.8h-1V482.8h-1V482.8h-1V482.8h-1V482.8h-1V482.8h-1V482.8h-1V482.8h-1V482.8h-1V482.8h-1V482.8h-1V482.8h-1V482.8h-1V482.8h-1V482.8h-1V482.8h-1V482.8h-1V482.8h-1V482.8h-1V482.8h-1V482.8h-1V482.8h-1V482.8h-1V482.8h-1V482.8h-1V482.8h-1V482.8h-1V482.8h-1V482.8h-1V482.8h-1V482.8h-1V482.8h-1V482.8h-1V482.8h-1V482.8h-1V482.8h-1V482.8h-1V482.8h-1V482.8h-1V482.8h-1V482.8h-1V482.8h-1V482.8h-1V482.8h-1V482.8h-1V482.8h-1V482.8h-1V482.8h-1V482.8h-1V482.8h-1V482.8h-1V482.8h-1V482.8h-1V482.8h-1V482.8h-1V482.8h-1V482.8h-1V482.8h-1V482.8h-1V482.8h-1V482.8h-1V482.8h-1V482.8h-1V482.8h-1V482.8h-1V482.8h-1V482.8h-1V482.8h-1V482.8h-1V482.8h-1V482.8h-1V482.8h-1V482.8h-1V482.8h-1V482.8h-1V482.8h-1V482.8h-1V482.8h-1V482.8h-1V482.8h-1V482.8h-1V482.8h-1V482.8h-1V482.8h-1V482.8h-1V482.8h-1V482.8h-1V482.8h-1V482.8h-1V482.8h-1V482.8h-1V482.8h-1V482.8h-1V482.8h-1V482.8h-1V482.8h-1V482.8h-1V482.8h-1V482.8h-1V482.8h-1V482.8h-1V482.8h-1V482.8h-1V482.8h-1V482.8h-1V482.8h-1V482.8h-1V482.8h-1V482.8h-1V482.8h-1V482.8h-1V482.8h-1V482.8h-1V482.8h-1V482.8h-1V482.8h-1V482.8h-1V482.8h-1V482.8h-1V482.8h-1V482.8h-1V482.8h-1V482.8h-1V482.8h-1V482.8h-1V482.8h-1V482.8h-1V482.8h-1V482.8h-1V482.8h-1V482.8h-1V482.8h-1V482.8h-1V482.8h-1V482.8h-1V482.8h-1V482.8h-1V482.8h-1V482.8h-1V482.8h-1V482.8h-1V482.8h-1V482.8h-1V482.8h-1V482.8h-1V482.8h-1V482.8h-1V482.8h-1V482.8h-1V482.8h-1V482.8h-1V482.8h-1V482.8h-1V482.8h-1V482.8h-1V482.8h-1V482.8h-1V482.8h-1V482.8h-1V482.8h-1V482.8h-1V482.8h-1V482.8h-1V482.8h-1V482.8h-1V482.8h-1V482.8h-1V482.8h-1V482.8h-1V482.8h-1V482.8h-1V482.8h-1V482.8h-1V482.8h-1V482.8h-1V482.8h-1V482.8h-1V482.8h-1V482.8h-1V482.8h-1V482.8h-1V482.8h-1V482.8h-1V482.8h-1V482.8h-1V482.8h-1V482.8h-1V482.8h-1V482.8h-1V482.8h-1V482.8h-1V482.8h-1V482.8h-1V482.8h-1V482.8h-1V482.8h-1V482.8h-1V482.8h-1V482.8h-1V482.8h-1V482.8h-1V482.8h-1V482.8h-1V482.8h-1V482.8h-1V482.8h-1V482.8h-1V482.8h-1V482.8h-1V482.8h-1V482.8h-1V482.8h-1V482.8h-1V482.8h-1V482.8h-1V482.8h-1V482.8h-1V482.8h-1V482.8h-1V482.8h-1V482.8h-1V482.8h-1V482.8h-1V482.8h-1V482.8h-1V482.8h-1V482.8h-1V482.8h-1V482.8h-1V482.8h-1V482.8h-1V482.8h-1V482.8h-1V482.8h-1V482.8h-1V482.8h-1V482.8h-1V482.8h-1V482.8h-1V482.8h-1V482.8h-1V482.8h-1V482.8h-1V482.8h-1V482.8h-1V482.8h-1V482.8h-1V482.8h-1V482.8h-1V482.8h-1V482.8h-1V482.8h-1V482.8h-1V482.8h-1V482.8h-1V482.8h-1V482.8h-1V482.8h-1V482.8h-1V482.8h-1V482.8h-1V482.8h-1V482.8h-1V482.8h-1V482.8h-1V482.8h-1V482.8h-1V482.8h-1V482.8h-1V482.8h-1V482.8h-1V482.8h-1V482.8h-1V482.8h-1V482.8h-1V482.8h-1V482.8h-1V482.8h-1V482.8h-1V482.8h-1V482.8h-1V482.8h-1V482.8h-1V482.8h-1V482.8h-1V482.8h-1V482.8h-1V482.8h-1V482.8h-1V482.8h-1V482.8h-1V482.8h-1V482.8h-1V482.8h-1V482.8h-1V482.8h-1V482.8h-1V482.8h-1V482.8h-1V482.8h-1V482.8h-1V482.8h-1V482.8h-1V482.8h-1V482.8h-1V482.8h-1V482.8h-1V482.8h-1V482.8h-1V482.8h-1V482.8h-1V482.8h-1V482.8h-1V482.8h-1V482.8h-1V482.8h-1V482.8h-1V482.8h-1V482.8h-1V482.8h-1V482.8h-1V482.8h-1V482.8h-1V482.8h-1V482.8h-1V482.8h-1V482.8h-1V482.8h-1V482.8h-1V482.8h-1V482.8h-1V482.8h-1V482.8h-1V482.8h-1V482.8h-1V482.8h-1V482.8h-1V482.8h-1V482.8h-1V482.8h-1V482.8h-1V482.8h-1V482.8h-1V482.8h-1V482.8h-1V482.8h-1V482.8h-1V482.8h-1V482.8h-1V482.8h-1V482.8h-1V482.8h-1V482.8h-1V482.8h-1V482.8h-1V482.8h-1V482.8h-1V482.8h-1V482.8h-1V482.8h-1V482.8h-1V482.8h-1V482.8h-1V482.8h-1V482.8h-1V482.8h-1V482.8h-1V482.8h-1V482.8h-1V482.8h-1V482.8h-1V482.8h-1V482.8h-1V482.8h-1V482.8h-1V482.8h-1V482.8h-1V482.8h-1V482.8h-1V482.8h-1V482.8h-1V482.8h-1V482.8h-1V482.8h-1V482.8h-1V482.8h-1V482.8h-1V482.8h-1V482.8h-1V482.8h-1V482.8h-1V482.8h-1V482.8h-1V482.8h-1V482.8h-1V482.8h-1V482.8h-1V482.8h-1V482.8h-1V482.8h-1V482.8h-1V482.8h-1V482.8h-1V482.8h-1V482.8h-1V482.8h-1V482.8h-1V482.8h-1V482.8h-1V482.8h-1V482.8h-1V482.8h-1V482.8h-1V482.8h-1V482.8h-1V482.8h-1V482.8h-1V482.8h-1V482.8h-1V482.8h-1V482.8h-1V482.8h-1V482.8h-1V482.8h-1V482.8h-1V482.8h-1V482.8h-1V482.8h-1V482.8h-1V482.8h-1V482.8h-1V482.8h-1V482.8h-1V482.8h-1V482.8h-1V482.8h-1V482.8h-1V482.8h-1V482.8h-1V482.8h-1V482.8h-1V482.8h-1V482.8h-1V482.8h-1V482.8h-1V482.8h-1V482.8h-1V482.8h-1V482.8h-1V482.8h-1V482.8h-1V482.8h-1V482.8h-1V482.8h-1V482.8h-1V482.8h-1V482.8h-1V482.8h-1V482.8h-1V482.8h-1V482.8h-1V482.8h-1V482.8h-1V482.8h-1V482.8h-1V482.8h-1V482.8h-1V482.8h-1V482.8h-1V482.8h-1V482.8h-1V482.8h-1V482.8h-1V482.8h-1V482.8h-1V482.8h-1V482.8h-1V482.8h-1V482.8h-1V482.8h-1V482.8h-1V482.8h-1V482.8h-1V482.8h-1V482.8h-1V482.8h-1V482.8h-1V482.8h-1V482.8h-1V482.8h-1V482.8h-1V482.8h-1V482.8h-1V482.8h-1V482.8h-1V482.8h-1V482.8h-1V482.8h-1V482.8h-1V482.8h-1V482.8h-1V482.8h-1V482.8h-1V482.8h-1V482.8h-1V482.8h-1V482.8h-1V482.8h-1V482.8h-1V482.8h-1V482.8h-1V482.8h-1V482.8h-1V482.8h-1V482.8h-1V482.8h-1V482.8h-1V482.8h-1V482.8h-1V482.8h-1V482.8h-1V482.8h-1V482.8h-1V482.8h-1V482.8h-1V482.8h-1V482.8h-1V482.8h-1V482.8h-1V482.8h-1V482.8h-1V482.8h-1V482.8h-1V482.8h-1V482.8h-1V482.8h-1V482.8h-1V482.8h-1V482.8h-1V482.8h-1V482.8h-1V482.8h-1V482.8h-1V482.8h-1V482.8h-1V482.8h-1V482.8h-1V482.8h-1V482.8h-1V482.8h-1V482.8h-1V482.8h-1V482.8h-1V482.8h-1V482.8h-1V482.8h-1V482.8h-1V482.8h-1V482.8h-1V482.8h-1V482.8h-1V482.8h-1V482.8h-1V482.8h-1V482.8h-1V482.8h-1V482.8h-1V482.8h-1V482.8h-1V482.8h-1V482.8h-1V482.8h-1V482.8h-1V482.8h-1V482.8h-1V482.8h-1V482.8h-1V482.8h-1V482.8h-1V482.8h-1V482.8h-1V482.8h-1V482.8h-1V482.8h-1V482.8h-1V482.8h-1V482.8h-1V482.8h-1V482.8h-1V482.8h-1V482.8h-1V482.8h-1V482.8h-1V482.8h-1V482.8h-1V482.8h-1V482.8h-1V482.8h-1V482.8h-1V482.8h-1V482.8h-1V482.8h-1V482.8h-1V482.8h-1V482.8h-1V482.8h-1V482.8h-1V482.8h-1V482.8h-1V482.8h-1V482.8h-1V482.8h-1V482.8h-1V482.8h-1V482.8h-1V482.8h-1V482.8h-1V482.8h-1V482.8h-1V482.8h-1V482.8h-1V482.8h-1V482.8h-1V482.8h-1V482.8h-1V482.8h-1V482.8h-1V482.8h-1V482.8h-1V482.8h-1V482.8h-1V482.8h-1V482.8h-1V482.8h-1V482.8h-1V482.8h-1V482.8h-1V482.8h-1V482.8h-1V482.8h-1V482.8h-1V482.8h-1V482.8h-1V482.8h-1V482.8h-1V482.8h-1V482.8h-1V482.8h-1V482.8h-1V482.8h-1V482.8h-1V482.8h-1V482.8h-1V482.8h-1V482.8h-1V482.8h-1V482.8h-1V482.8h-1V482.8h-1V482.8h-1V482.8h-1V482.8h-1V482.8h-1V482.8h-1V482.8h-1V482.8h-1V482.8h-1V482.8h-1V482.8h-1V482.8h-1V482.8h-1V482.8h-1V482.8h-1V482.8h-1V482.8h-1V482.8h-1V482.8h-1V482.8h-1V482.8h-1V482.8h-1V482.8h-1V482.8h-1V482.8h-1V482.8h-1V482.8h-1V482.8h-1V482.8h-1V482.8h-1V482.8h-1V482.8h-1V482.8h-1V482.8h-1V482.8h-1V482.8h-1V482.8h-1V482.8h-1V482.8h-1V482.8h-1V482.8h-1V482.8h-1V482.8h-1V482.8h-1V482.8h-1V482.8h-1V482.8h-1V482.8h-1V482.8h-1V482.8h-1V482.8h-1V482.8h-1V482.8h-1V482.8h-1V482.8h-1V482.8h-1V482.8h-1V482.8h-1V482.8h-1V482.8h-1V482.8h-1V482.8h-1V482.8h-1V482.8h-1V482.8h-1V482.8h-1V482.8h-1V482.8h-1V482.8h-1V482.8h-1V482.8h-1V482.8h-1V482.8h-1V482.8h-1V482.8h-1V482.8h-1V482.8h-1V482.8h-1V482.8h-1V482.8h-1V482.8h-1V482.8h-1V482.8h-1V482.8h-1V482.8h-1V482.8h-1V482.8h-1V482.8h-1V482.8h-1V482.8h-1V482.8h-1V482.8h-1V482.8h-1V482.8h-1V482.8h-1V482.8h-1V482.8h-1V482.8h-1V482.8h-1V482.8h-1V482.8h-1V482.8h-1V482.8h-1V482.8h-1Z"/></svg>
<div class="a" style="left:499px;top:226px;width:12px;height:795px;background:linear-gradient(90deg,rgba(130,142,45,0) 0,rgba(130,142,45,0.28) 25%,rgba(138,150,48,0.75) 38%,#dfe98c 42%,#dfe98c 58%,rgba(138,150,48,0.75) 62%,rgba(130,142,45,0.28) 75%,rgba(130,142,45,0) 100%)"></div>
<div class="a" style="left:1891px;top:358px;width:20px;height:540px;border-radius:4px;background:linear-gradient(#9cab58 0%,#9ba857 48%,#8f9a45 56%,#8a953b 64%,#87923a 86%,#7f8940 93%,#7a8340 100%)"></div>
<div class="a" style="left:1891px;top:898px;width:20px;height:123px;background:linear-gradient(#6f773c,#5a6034);border-radius:0 0 4px 4px"></div>
<div class="a" style="left:1911px;top:900px;width:9px;height:123px;background:linear-gradient(rgba(55,58,28,0),rgba(55,58,28,0.8))"></div>
<div class="a" style="left:1px;top:1021px;width:1919px;height:8px;background:#4a4d28"></div>
<div class="a" style="left:3px;top:1023px;width:74px;height:1px;background:#1c1d14"></div>
<div class="a" style="left:1px;top:1029px;width:1919px;height:51px;background:linear-gradient(#7a8340 0,#7a8340 1px,#5f6634 1.5px,#5c6332 50%,#4f5429 100%)"></div>
<div class="a" style="left:12px;top:1036px;width:64px;height:37px;background:linear-gradient(#676e3a,#5a6031 45%,#494e27);border-radius:6px;box-shadow:0 0 0 1px #4b4f42,1px 1px 1px #33361f"></div>
<div class="a" style="left:85px;top:1036px;width:64px;height:37px;background:linear-gradient(#676e3a,#5a6031 45%,#494e27);border-radius:6px;box-shadow:0 0 0 1px #4b4f42,1px 1px 1px #33361f"></div>
<div class="a" style="left:160px;top:1036px;width:63px;height:38px;background:#2f3220;border-radius:4px"></div>
<svg class="a" style="left:0;top:1030px" width="240" height="48">
<defs><linearGradient id="g1" x1="0" y1="0" x2="0" y2="1"><stop offset="0" stop-color="#fff"/><stop offset="0.55" stop-color="#f4f4f4"/><stop offset="1" stop-color="#c9cbd0"/></linearGradient>
<radialGradient id="g2" cx="0.4" cy="0.35" r="0.7"><stop offset="0" stop-color="#d6d7bd"/><stop offset="0.6" stop-color="#bfc1a2"/><stop offset="1" stop-color="#8b8e6c"/></radialGradient></defs>
<path d="M32.5 14.5L56 24.5L32.5 34.5Z" fill="url(#g1)"/>
<rect x="107" y="14" width="20" height="20" rx="3" fill="url(#g1)"/>
<circle cx="190" cy="24.5" r="10.3" fill="url(#g2)"/></svg>
<div class="t" style="left:270px;top:1050px;font-size:9.2px;font-weight:bold;color:#d9dcc2">0:10:000</div>
<div class="a c" style="left:365.5px;top:1036px;width:53px;height:38px;font-size:15.1px;background:#30331f;border-radius:3px;color:#b9bd99;padding-top:1px">Punch</div>
<div class="a" style="left:544px;top:1035px;width:80px;height:38px;border-radius:5px;background:#60673a;box-shadow:0 0 0 1px #6b7242"></div>
<div class="t" style="left:549px;top:1051px;font-size:9px;color:#e2e5d0;letter-spacing:-0.35px" id="newtake">New Take</div>
<svg class="a" style="left:598px;top:1044px" width="22" height="20" fill="none" stroke="#e6e9d6" stroke-width="1.5"><path d="M3 3L11 16L19 3"/></svg>
<div class="a c" style="left:633.5px;top:1036px;width:62px;height:38px;font-size:16.2px;background:#30331f;border-radius:3px;color:#b9bd99;padding-top:1px">Click</div>
<div class="a" style="left:703px;top:1039px;width:1px;height:30px;background:#6c7340"></div>
<div class="a c" style="left:709px;top:1034px;width:76px;height:40px;background:#525831;color:#7b8353;font-size:11.5px;padding-top:2px;padding-left:3px">120 BPM</div>
<div class="t" style="left:802px;top:1050.5px;font-size:9px;font-weight:bold;color:#f1f3e6">4</div>
<div class="a c" style="left:821px;top:1035px;width:24px;height:18px;background:linear-gradient(#3c3e40,#2d2f30);border-radius:5px;color:#d5d8c2;font-size:9px">+</div>
<div class="a c" style="left:821px;top:1056px;width:24px;height:17px;background:linear-gradient(#3c3e40,#2d2f30);border-radius:5px;color:#d5d8c2;font-size:9px">-</div>
<div class="a" style="left:855px;top:1035px;width:40px;height:38px;border-radius:4px;box-shadow:0 0 0 1px #656c3d;background:#596033"></div>
<div class="t" style="left:860.5px;top:1054px;font-size:8px;color:#a5aa83">--</div>
<svg class="a" style="left:871px;top:1044px" width="22" height="20" fill="none" stroke="#e6e9d6" stroke-width="1.5"><path d="M3 3L10.5 15L18 3"/></svg>
<div class="a" style="left:903px;top:1039px;width:1px;height:30px;background:#6c7340"></div>
<div class="a c bb" style="left:909px;top:1036px;width:114px;height:37px;font-size:16px;padding-top:1px;color:#e9ebdc;background:linear-gradient(#676e3a,#5a6031 45%,#494e27);border-radius:6px;box-shadow:0 0 0 1px #4b4f42,1px 1px 1px #33361f"><span style="display:inline-block;transform:scaleX(0.828)">Sample Browser</span></div>
<div class="a c bb" style="left:1027px;top:1036px;width:73px;height:37px;font-size:16px;padding-top:1px;color:#e9ebdc;background:linear-gradient(#676e3a,#5a6031 45%,#494e27);border-radius:6px;box-shadow:0 0 0 1px #4b4f42,1px 1px 1px #33361f"><span style="display:inline-block;transform:scaleX(1)">Options</span></div>
<div class="a c bb" style="left:1110px;top:1036px;width:86px;height:37px;font-size:16px;padding-top:1px;color:#e9ebdc;background:linear-gradient(#676e3a,#5a6031 45%,#494e27);border-radius:6px;box-shadow:0 0 0 1px #4b4f42,1px 1px 1px #33361f"><span style="display:inline-block;transform:scaleX(0.898)">Crossfades</span></div>
<div class="a c bb" style="left:1199px;top:1036px;width:73px;height:37px;font-size:16px;padding-top:1px;color:#e9ebdc;background:linear-gradient(#676e3a,#5a6031 45%,#494e27);border-radius:6px;box-shadow:0 0 0 1px #4b4f42,1px 1px 1px #33361f"><span style="display:inline-block;transform:scaleX(1)">Effects</span></div>
<div class="a c bb" style="left:1275px;top:1036px;width:85px;height:37px;font-size:16px;padding-top:1px;color:#e9ebdc;background:linear-gradient(#676e3a,#5a6031 45%,#494e27);border-radius:6px;box-shadow:0 0 0 1px #4b4f42,1px 1px 1px #33361f"><span style="display:inline-block;transform:scaleX(0.884)">Modulation</span></div>
<div class="a c bb" style="left:1370px;top:1036px;width:74px;height:37px;font-size:16px;padding-top:1px;color:#e9ebdc;background:linear-gradient(#676e3a,#5a6031 45%,#494e27);border-radius:6px;box-shadow:0 0 0 1px #4b4f42,1px 1px 1px #33361f"><span style="display:inline-block;transform:scaleX(1)">Mixer</span></div>
<div class="a c bb" style="left:1447px;top:1036px;width:94px;height:37px;font-size:16px;padding-top:1px;color:#e9ebdc;background:linear-gradient(#676e3a,#5a6031 45%,#494e27);border-radius:6px;box-shadow:0 0 0 1px #4b4f42,1px 1px 1px #33361f"><span style="display:inline-block;transform:scaleX(0.923)">Instruments</span></div>
<div class="a c bb" style="left:1544px;top:1036px;width:94px;height:37px;font-size:16px;padding-top:1px;color:#e9ebdc;background:linear-gradient(#676e3a,#5a6031 45%,#494e27);border-radius:6px;box-shadow:0 0 0 1px #4b4f42,1px 1px 1px #33361f"><span style="display:inline-block;transform:scaleX(0.902)">Sample Pool</span></div>
<div class="a c bb" style="left:1641px;top:1036px;width:74px;height:37px;font-size:16px;padding-top:1px;color:#e9ebdc;background:linear-gradient(#676e3a,#5a6031 45%,#494e27);border-radius:6px;box-shadow:0 0 0 1px #4b4f42,1px 1px 1px #33361f"><span style="display:inline-block;transform:scaleX(1)">Player</span></div>
<div class="a c bb" style="left:1718px;top:1036px;width:55px;height:37px;font-size:16px;padding-top:1px;color:#e9ebdc;background:linear-gradient(#676e3a,#5a6031 45%,#494e27);border-radius:6px;box-shadow:0 0 0 1px #4b4f42,1px 1px 1px #33361f"><span style="display:inline-block;transform:scaleX(1.03)">VST</span></div>
<div class="a" style="left:1781px;top:1039px;width:1px;height:30px;background:#6c7340"></div>
<div class="t" style="left:1843px;top:1049.5px;font-size:10.4px;color:#a9ad8c">CPU: 14.8%</div>
<svg class="a" style="left:1900px;top:1059px" width="20" height="20" stroke="#c3c7a4" stroke-width="1.8"><path d="M20 2L2 20M20 7.5L7.5 20M20 13L13 20"/></svg>
<div class="a" style="left:907px;top:56px;width:106px;height:106px;border-radius:53px;overflow:hidden;background:rgba(165,180,90,0.16)"><div class="a" style="left:0;top:7px;width:106px;height:5px;background:rgba(170,186,92,0.62)"></div><div class="a" style="left:0;top:32px;width:106px;height:5px;background:rgba(170,186,92,0.62)"></div><div class="a" style="left:0;top:97px;width:106px;height:5px;background:rgba(170,186,92,0.5)"></div></div></div></div></body></html>
